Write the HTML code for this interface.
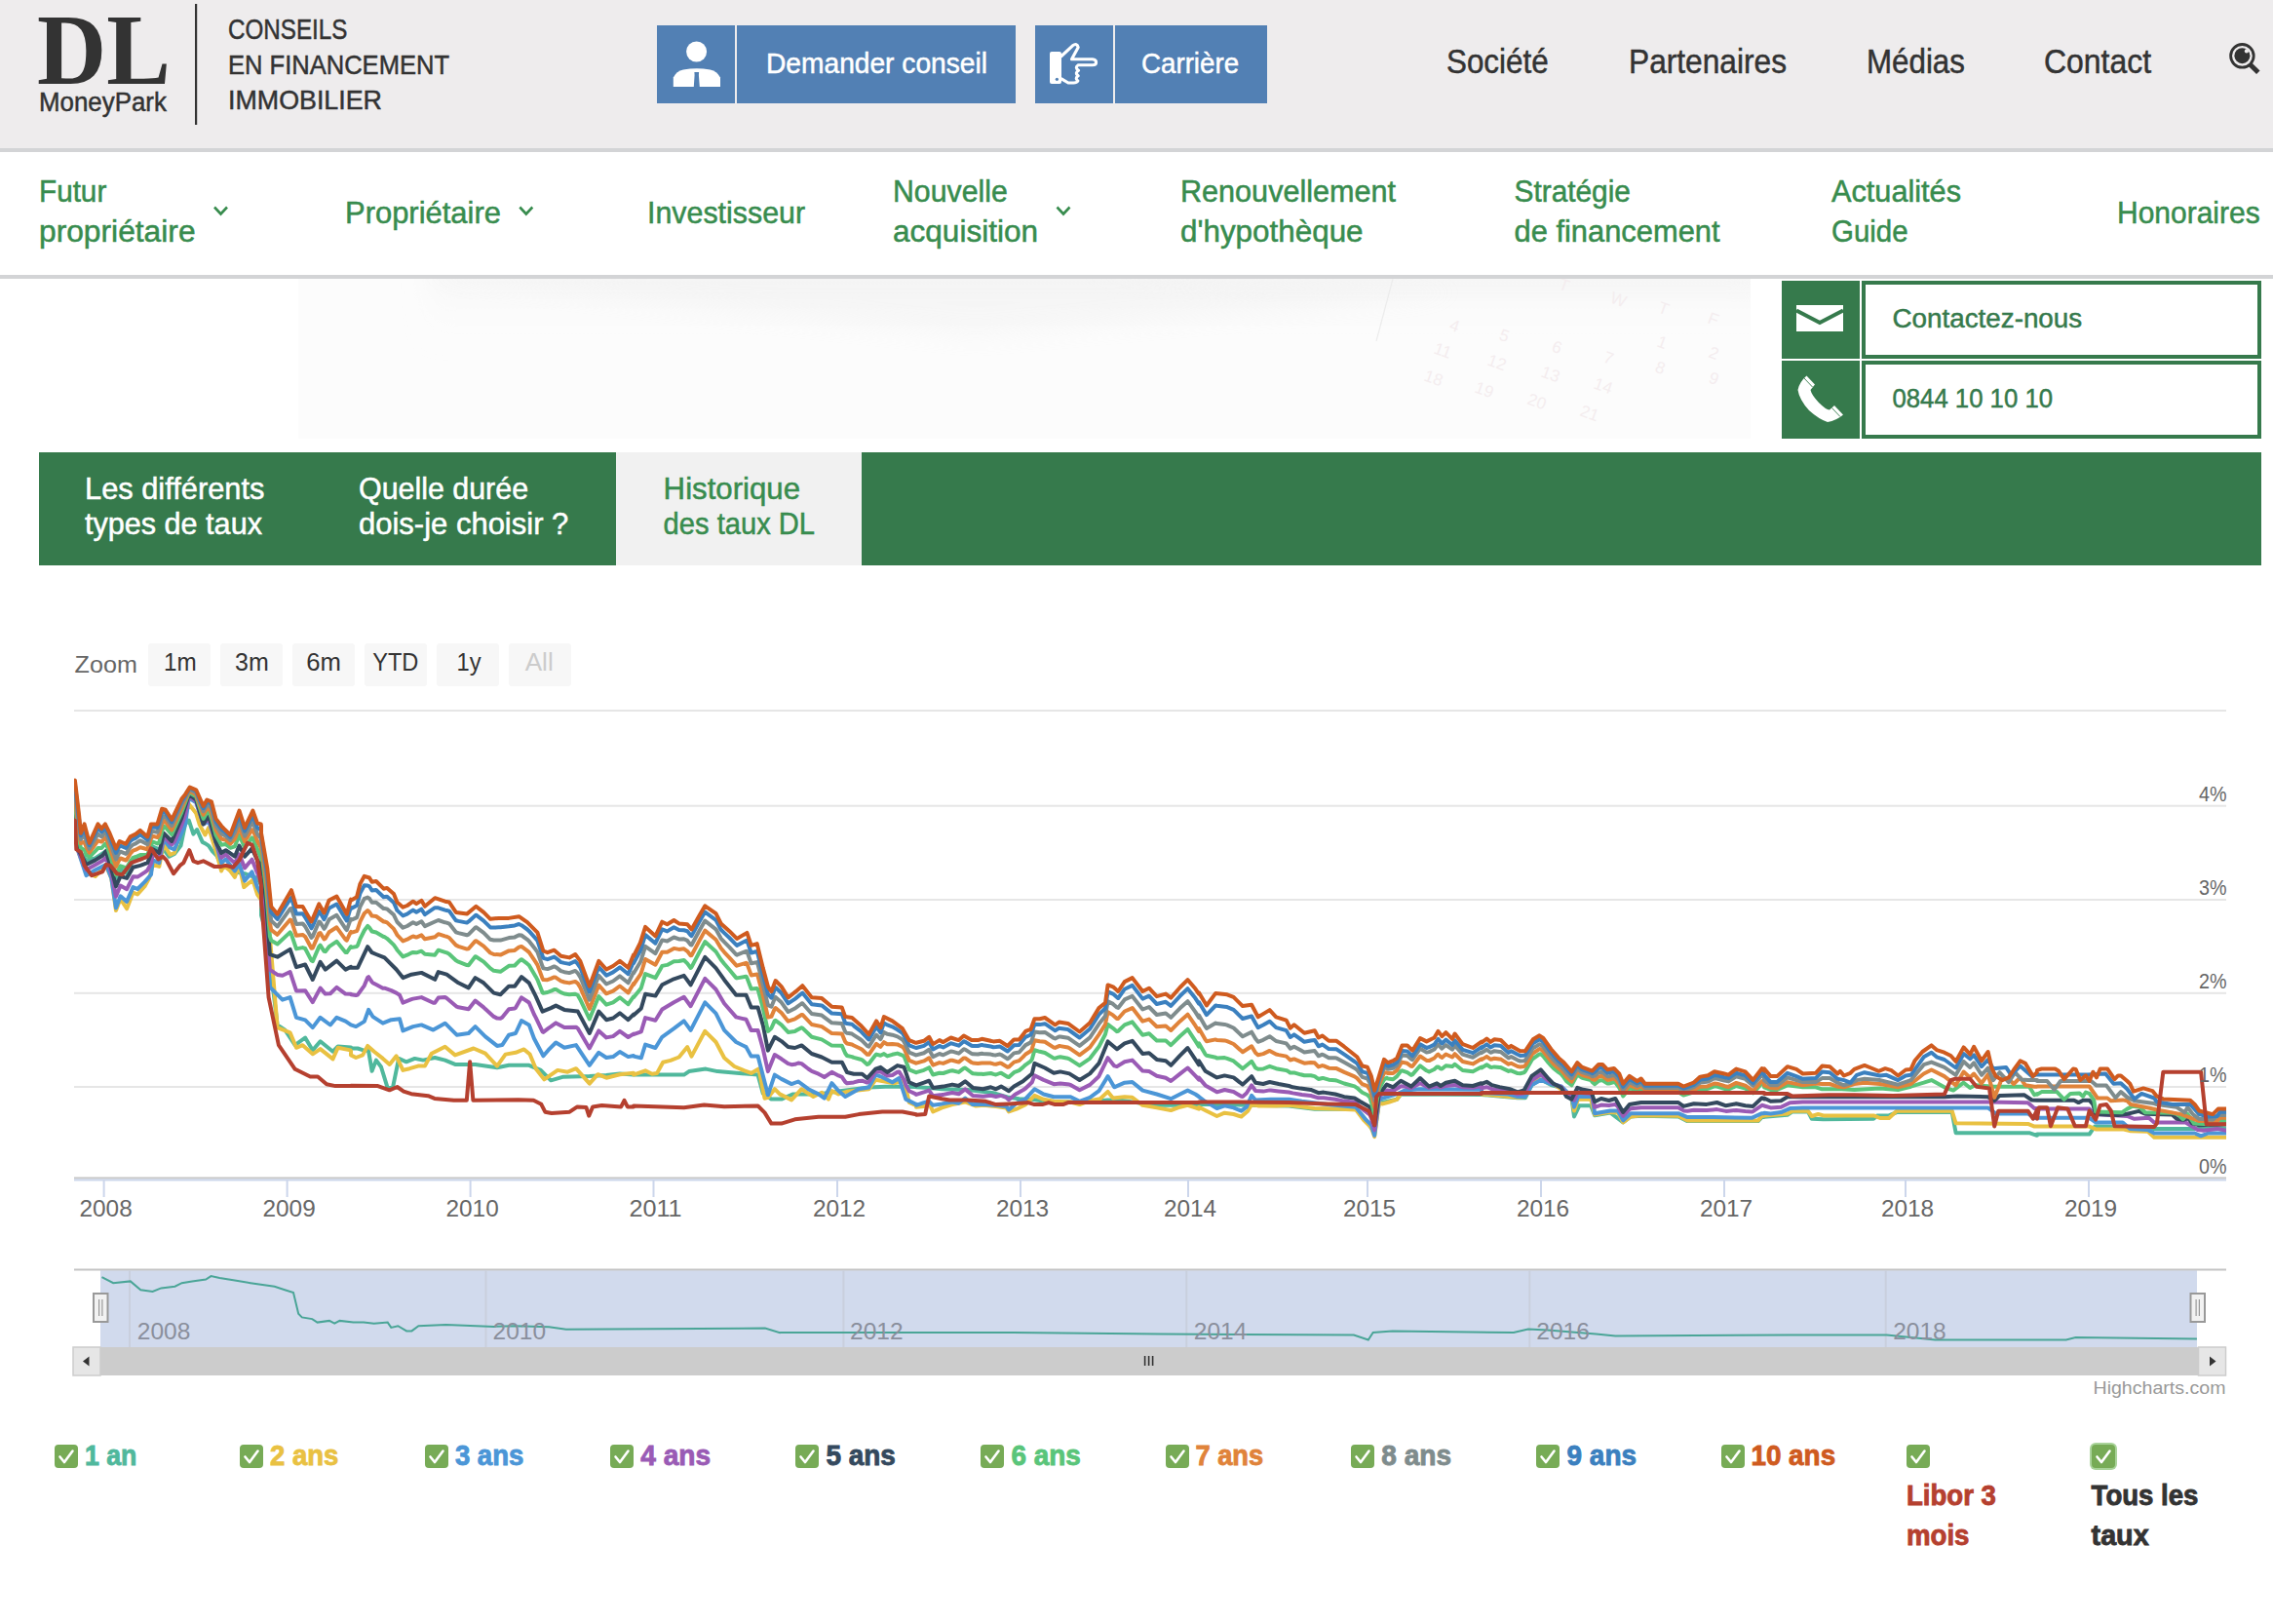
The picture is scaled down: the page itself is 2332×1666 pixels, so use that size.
<!DOCTYPE html><html lang="fr"><head><meta charset="utf-8"><title>Historique des taux DL - MoneyPark</title><style>html,body{margin:0;padding:0;background:#fff;overflow:hidden;font-family:"Liberation Sans",sans-serif}</style></head><body><svg width="2332" height="1666" viewBox="0 0 2332 1666" style="display:block">
<defs><linearGradient id="hero" x1="0" y1="0" x2="0.35" y2="1"><stop offset="0" stop-color="#efefef"/><stop offset="0.5" stop-color="#f9f9f9"/><stop offset="1" stop-color="#fdfdfd"/></linearGradient><linearGradient id="herotop" x1="0" y1="0" x2="0" y2="1"><stop offset="0" stop-color="#f4f4f4"/><stop offset="1" stop-color="#fcfcfc" stop-opacity="0"/></linearGradient><filter id="blur12" x="-50%" y="-50%" width="200%" height="200%"><feGaussianBlur stdDeviation="12"/></filter><clipPath id="heroclip"><rect x="306" y="286" width="1490" height="164"/></clipPath><clipPath id="plotclip"><rect x="76" y="740" width="2208" height="470"/></clipPath></defs>
<rect x="0" y="0" width="2332" height="1666" fill="#ffffff"/>
<rect x="0" y="0" width="2332" height="152" fill="#eeeced"/>
<rect x="0" y="152" width="2332" height="4" fill="#d3d4d6"/>
<text x="38.00" y="86.00" font-family='"Liberation Serif", serif' font-weight="700" font-size="104.12" fill="#333333" textLength="136.92" lengthAdjust="spacingAndGlyphs">DL</text>
<text x="40.00" y="113.80" font-family='"Liberation Sans", sans-serif' font-weight="400" font-size="27.62" fill="#333333" stroke="#333333" stroke-width="0.5" textLength="130.81" lengthAdjust="spacingAndGlyphs">MoneyPark</text>
<rect x="200" y="4" width="2.2" height="124" fill="#333333"/>
<text x="234.00" y="40.00" font-family='"Liberation Sans", sans-serif' font-weight="400" font-size="29.07" fill="#333333" stroke="#333333" stroke-width="0.5" textLength="122.35" lengthAdjust="spacingAndGlyphs">CONSEILS</text>
<text x="234.00" y="76.00" font-family='"Liberation Sans", sans-serif' font-weight="400" font-size="28.49" fill="#333333" stroke="#333333" stroke-width="0.5" textLength="226.99" lengthAdjust="spacingAndGlyphs">EN FINANCEMENT</text>
<text x="234.00" y="112.00" font-family='"Liberation Sans", sans-serif' font-weight="400" font-size="28.49" fill="#333333" stroke="#333333" stroke-width="0.5" textLength="157.99" lengthAdjust="spacingAndGlyphs">IMMOBILIER</text>
<rect x="674" y="26" width="80" height="80" fill="#5280b4"/>
<rect x="756" y="26" width="286" height="80" fill="#5280b4"/>
<rect x="1062" y="26" width="80" height="80" fill="#5280b4"/>
<rect x="1144" y="26" width="156" height="80" fill="#5280b4"/>
<circle cx="714.6" cy="53" r="10.5" fill="#fff"/>
<path d="M690.8,89 L690.8,79.5 Q694,73 701,71.6 Q708,70.2 714.8,70.2 Q721.6,70.2 728.6,71.6 Q735.6,73 739,79.5 L739,89 Z" fill="#fff"/>
<path d="M712.4,74 L717.1,74 L716.9,77 L717.8,89 L711.8,89 L712.6,77 Z" fill="#5280b4"/>
<rect x="1077" y="53" width="12" height="33" rx="2" fill="#fff"/>
<circle cx="1084.4" cy="81.3" r="1.6" fill="#5280b4"/>
<path d="M1089,57.5 L1100.5,46.8 Q1105,43.6 1106.2,48.6 L1099.5,60.8 L1120.8,60.8 Q1124.6,61.2 1124.6,63.9 Q1124.6,66.7 1120.8,66.7 L1106.2,66.7 Q1102.2,69.4 1106.6,72.2 Q1102.2,75 1106.2,77.8 Q1102.4,80.4 1105.9,83 Q1104.6,85 1101.5,85 L1096,85 L1089,80.8" fill="none" stroke="#fff" stroke-width="3.1" stroke-linejoin="round" stroke-linecap="round"/>
<text x="786.00" y="74.50" font-family='"Liberation Sans", sans-serif' font-weight="400" font-size="29.80" fill="#ffffff" stroke="#ffffff" stroke-width="0.5" textLength="227.00" lengthAdjust="spacingAndGlyphs">Demander conseil</text>
<text x="1171.00" y="74.50" font-family='"Liberation Sans", sans-serif' font-weight="400" font-size="29.80" fill="#ffffff" stroke="#ffffff" stroke-width="0.5" textLength="100.06" lengthAdjust="spacingAndGlyphs">Carrière</text>
<text x="1484.00" y="74.60" font-family='"Liberation Sans", sans-serif' font-weight="400" font-size="35.17" fill="#333333" stroke="#333333" stroke-width="0.5" textLength="104.62" lengthAdjust="spacingAndGlyphs">Société</text>
<text x="1671.00" y="74.60" font-family='"Liberation Sans", sans-serif' font-weight="400" font-size="35.17" fill="#333333" stroke="#333333" stroke-width="0.5" textLength="161.97" lengthAdjust="spacingAndGlyphs">Partenaires</text>
<text x="1915.00" y="74.60" font-family='"Liberation Sans", sans-serif' font-weight="400" font-size="35.17" fill="#333333" stroke="#333333" stroke-width="0.5" textLength="100.96" lengthAdjust="spacingAndGlyphs">Médias</text>
<text x="2097.00" y="74.60" font-family='"Liberation Sans", sans-serif' font-weight="400" font-size="35.17" fill="#333333" stroke="#333333" stroke-width="0.5" textLength="110.04" lengthAdjust="spacingAndGlyphs">Contact</text>
<circle cx="2300.4" cy="57.3" r="11.8" fill="none" stroke="#333" stroke-width="2.8"/>
<circle cx="2300.4" cy="57.2" r="8" fill="#333"/>
<circle cx="2304.9" cy="52.4" r="2.1" fill="#eeeced"/>
<line x1="2308.6" y1="66.2" x2="2316.8" y2="74.2" stroke="#333" stroke-width="5"/>
<rect x="0" y="282" width="2332" height="4" fill="#d3d4d6"/>
<text x="40.00" y="206.60" font-family='"Liberation Sans", sans-serif' font-weight="400" font-size="30.67" fill="#388c4e" stroke="#388c4e" stroke-width="0.5" textLength="69.27" lengthAdjust="spacingAndGlyphs">Futur</text>
<text x="40.00" y="247.70" font-family='"Liberation Sans", sans-serif' font-weight="400" font-size="30.81" fill="#388c4e" stroke="#388c4e" stroke-width="0.5" textLength="160.55" lengthAdjust="spacingAndGlyphs">propriétaire</text>
<text x="354.00" y="228.60" font-family='"Liberation Sans", sans-serif' font-weight="400" font-size="31.10" fill="#388c4e" stroke="#388c4e" stroke-width="0.5" textLength="159.98" lengthAdjust="spacingAndGlyphs">Propriétaire</text>
<text x="664.00" y="228.60" font-family='"Liberation Sans", sans-serif' font-weight="400" font-size="31.10" fill="#388c4e" stroke="#388c4e" stroke-width="0.5" textLength="162.02" lengthAdjust="spacingAndGlyphs">Investisseur</text>
<text x="916.00" y="206.60" font-family='"Liberation Sans", sans-serif' font-weight="400" font-size="30.67" fill="#388c4e" stroke="#388c4e" stroke-width="0.5" textLength="117.84" lengthAdjust="spacingAndGlyphs">Nouvelle</text>
<text x="916.00" y="247.70" font-family='"Liberation Sans", sans-serif' font-weight="400" font-size="30.81" fill="#388c4e" stroke="#388c4e" stroke-width="0.5" textLength="149.01" lengthAdjust="spacingAndGlyphs">acquisition</text>
<text x="1211.00" y="206.60" font-family='"Liberation Sans", sans-serif' font-weight="400" font-size="30.67" fill="#388c4e" stroke="#388c4e" stroke-width="0.5" textLength="221.05" lengthAdjust="spacingAndGlyphs">Renouvellement</text>
<text x="1211.00" y="247.70" font-family='"Liberation Sans", sans-serif' font-weight="400" font-size="30.81" fill="#388c4e" stroke="#388c4e" stroke-width="0.5" textLength="187.58" lengthAdjust="spacingAndGlyphs">d'hypothèque</text>
<text x="1553.50" y="206.60" font-family='"Liberation Sans", sans-serif' font-weight="400" font-size="30.67" fill="#388c4e" stroke="#388c4e" stroke-width="0.5" textLength="119.43" lengthAdjust="spacingAndGlyphs">Stratégie</text>
<text x="1553.50" y="247.70" font-family='"Liberation Sans", sans-serif' font-weight="400" font-size="30.81" fill="#388c4e" stroke="#388c4e" stroke-width="0.5" textLength="211.04" lengthAdjust="spacingAndGlyphs">de financement</text>
<text x="1879.00" y="206.60" font-family='"Liberation Sans", sans-serif' font-weight="400" font-size="30.67" fill="#388c4e" stroke="#388c4e" stroke-width="0.5" textLength="133.02" lengthAdjust="spacingAndGlyphs">Actualités</text>
<text x="1879.00" y="247.70" font-family='"Liberation Sans", sans-serif' font-weight="400" font-size="30.81" fill="#388c4e" stroke="#388c4e" stroke-width="0.5" textLength="78.56" lengthAdjust="spacingAndGlyphs">Guide</text>
<text x="2172.00" y="228.60" font-family='"Liberation Sans", sans-serif' font-weight="400" font-size="31.10" fill="#388c4e" stroke="#388c4e" stroke-width="0.5" textLength="146.64" lengthAdjust="spacingAndGlyphs">Honoraires</text>
<polyline points="220.0,212.5 226.5,219.5 233.0,212.5" fill="none" stroke="#388c4e" stroke-width="2.6"/>
<polyline points="533.3,212.5 539.8,219.5 546.3,212.5" fill="none" stroke="#388c4e" stroke-width="2.6"/>
<polyline points="1084.5,212.5 1091,219.5 1097.5,212.5" fill="none" stroke="#388c4e" stroke-width="2.6"/>
<rect x="306" y="286" width="1490" height="164" fill="#fcfcfc"/>
<g clip-path="url(#heroclip)">
<rect x="440" y="270" width="1400" height="80" fill="url(#herotop)" filter="url(#blur12)"/>
<polygon points="430,280 1150,280 1500,300 1000,345 760,320" fill="#e6e6e6" opacity="0.22" filter="url(#blur12)"/>
<polygon points="1100,280 1800,280 1800,300 1300,300" fill="#eeeeee" opacity="0.25" filter="url(#blur12)"/>
<line x1="1429" y1="286" x2="1412" y2="350" stroke="#ececec" stroke-width="1.2"/>
<text x="1598" y="296" font-family='"Liberation Sans", sans-serif' font-size="17" fill="#f4edef" transform="rotate(20 1598 296)">T</text>
<text x="1651" y="310" font-family='"Liberation Sans", sans-serif' font-size="17" fill="#f4edef" transform="rotate(20 1651 310)">W</text>
<text x="1700" y="320" font-family='"Liberation Sans", sans-serif' font-size="17" fill="#f4edef" transform="rotate(20 1700 320)">T</text>
<text x="1751" y="331" font-family='"Liberation Sans", sans-serif' font-size="17" fill="#f4edef" transform="rotate(20 1751 331)">F</text>
<text x="1486" y="338" font-family='"Liberation Sans", sans-serif' font-size="17" fill="#f4edef" transform="rotate(20 1486 338)">4</text>
<text x="1537" y="348" font-family='"Liberation Sans", sans-serif' font-size="17" fill="#f4edef" transform="rotate(20 1537 348)">5</text>
<text x="1591" y="360" font-family='"Liberation Sans", sans-serif' font-size="17" fill="#f4edef" transform="rotate(20 1591 360)">6</text>
<text x="1644" y="371" font-family='"Liberation Sans", sans-serif' font-size="17" fill="#f4edef" transform="rotate(20 1644 371)">7</text>
<text x="1699" y="355" font-family='"Liberation Sans", sans-serif' font-size="17" fill="#f4edef" transform="rotate(20 1699 355)">1</text>
<text x="1752" y="366" font-family='"Liberation Sans", sans-serif' font-size="17" fill="#f4edef" transform="rotate(20 1752 366)">2</text>
<text x="1470" y="362" font-family='"Liberation Sans", sans-serif' font-size="17" fill="#f4edef" transform="rotate(20 1470 362)">11</text>
<text x="1525" y="374" font-family='"Liberation Sans", sans-serif' font-size="17" fill="#f4edef" transform="rotate(20 1525 374)">12</text>
<text x="1580" y="386" font-family='"Liberation Sans", sans-serif' font-size="17" fill="#f4edef" transform="rotate(20 1580 386)">13</text>
<text x="1634" y="398" font-family='"Liberation Sans", sans-serif' font-size="17" fill="#f4edef" transform="rotate(20 1634 398)">14</text>
<text x="1697" y="381" font-family='"Liberation Sans", sans-serif' font-size="17" fill="#f4edef" transform="rotate(20 1697 381)">8</text>
<text x="1752" y="392" font-family='"Liberation Sans", sans-serif' font-size="17" fill="#f4edef" transform="rotate(20 1752 392)">9</text>
<text x="1460" y="390" font-family='"Liberation Sans", sans-serif' font-size="17" fill="#f4edef" transform="rotate(20 1460 390)">18</text>
<text x="1512" y="402" font-family='"Liberation Sans", sans-serif' font-size="17" fill="#f4edef" transform="rotate(20 1512 402)">19</text>
<text x="1566" y="414" font-family='"Liberation Sans", sans-serif' font-size="17" fill="#f4edef" transform="rotate(20 1566 414)">20</text>
<text x="1620" y="426" font-family='"Liberation Sans", sans-serif' font-size="17" fill="#f4edef" transform="rotate(20 1620 426)">21</text>
</g>
<rect x="1828" y="288" width="80" height="80" fill="#367a4c"/>
<rect x="1828" y="370" width="80" height="80" fill="#367a4c"/>
<rect x="1912" y="290" width="406" height="76" fill="#fff" stroke="#367a4c" stroke-width="4"/>
<rect x="1912" y="372" width="406" height="76" fill="#fff" stroke="#367a4c" stroke-width="4"/>
<rect x="1843" y="313" width="48" height="27" fill="#fff"/>
<polyline points="1843,318.4 1867,331 1891,318.4" fill="none" stroke="#367a4c" stroke-width="4"/>
<path d="M1853.5,385.5 L1862,394.5 L1857.5,400 Q1858.5,405 1866,413 Q1873.5,420.5 1877,420.5 L1882,416 L1891,425.5 Q1884,431.5 1875,433 Q1866,430 1856,421 Q1846,410 1844.5,400 Q1846,392 1853.5,385.5 Z" fill="#fff"/>
<line x1="1851" y1="388" x2="1859.5" y2="397" stroke="#367a4c" stroke-width="0.9"/>
<line x1="1879.5" y1="418.5" x2="1888" y2="427.5" stroke="#367a4c" stroke-width="0.9"/>
<text x="1941.50" y="335.50" font-family='"Liberation Sans", sans-serif' font-weight="400" font-size="27.62" fill="#367a4c" stroke="#367a4c" stroke-width="0.5" textLength="194.67" lengthAdjust="spacingAndGlyphs">Contactez-nous</text>
<text x="1941.50" y="417.60" font-family='"Liberation Sans", sans-serif' font-weight="400" font-size="27.62" fill="#367a4c" stroke="#367a4c" stroke-width="0.5" textLength="164.50" lengthAdjust="spacingAndGlyphs">0844 10 10 10</text>
<rect x="40" y="464" width="2280" height="116" fill="#367a4c"/>
<rect x="632" y="464" width="252" height="116" fill="#f1f1f1"/>
<text x="87.00" y="512.00" font-family='"Liberation Sans", sans-serif' font-weight="400" font-size="31.98" fill="#ffffff" stroke="#ffffff" stroke-width="0.5" textLength="184.41" lengthAdjust="spacingAndGlyphs">Les différents</text>
<text x="87.00" y="547.50" font-family='"Liberation Sans", sans-serif' font-weight="400" font-size="31.98" fill="#ffffff" stroke="#ffffff" stroke-width="0.5" textLength="181.95" lengthAdjust="spacingAndGlyphs">types de taux</text>
<text x="368.00" y="512.00" font-family='"Liberation Sans", sans-serif' font-weight="400" font-size="31.98" fill="#ffffff" stroke="#ffffff" stroke-width="0.5" textLength="174.04" lengthAdjust="spacingAndGlyphs">Quelle durée</text>
<text x="368.00" y="547.50" font-family='"Liberation Sans", sans-serif' font-weight="400" font-size="31.98" fill="#ffffff" stroke="#ffffff" stroke-width="0.5" textLength="215.32" lengthAdjust="spacingAndGlyphs">dois-je choisir ?</text>
<text x="680.60" y="512.00" font-family='"Liberation Sans", sans-serif' font-weight="400" font-size="31.98" fill="#388c4e" stroke="#388c4e" stroke-width="0.5" textLength="140.47" lengthAdjust="spacingAndGlyphs">Historique</text>
<text x="680.60" y="547.50" font-family='"Liberation Sans", sans-serif' font-weight="400" font-size="31.98" fill="#388c4e" stroke="#388c4e" stroke-width="0.5" textLength="155.44" lengthAdjust="spacingAndGlyphs">des taux DL</text>
<text x="76.60" y="690.00" font-family='"Liberation Sans", sans-serif' font-weight="400" font-size="24.71" fill="#666666" textLength="64.23" lengthAdjust="spacingAndGlyphs">Zoom</text>
<rect x="152" y="660" width="64" height="44" rx="3" fill="#f7f7f7"/>
<text x="168.10" y="688.00" font-family='"Liberation Sans", sans-serif' font-weight="400" font-size="25.58" fill="#333333" textLength="33.68" lengthAdjust="spacingAndGlyphs">1m</text>
<rect x="226" y="660" width="64" height="44" rx="3" fill="#f7f7f7"/>
<text x="241.00" y="688.00" font-family='"Liberation Sans", sans-serif' font-weight="400" font-size="25.58" fill="#333333" textLength="34.68" lengthAdjust="spacingAndGlyphs">3m</text>
<rect x="300" y="660" width="64" height="44" rx="3" fill="#f7f7f7"/>
<text x="314.20" y="688.00" font-family='"Liberation Sans", sans-serif' font-weight="400" font-size="25.58" fill="#333333" textLength="35.68" lengthAdjust="spacingAndGlyphs">6m</text>
<rect x="374" y="660" width="64" height="44" rx="3" fill="#f7f7f7"/>
<text x="382.20" y="688.00" font-family='"Liberation Sans", sans-serif' font-weight="400" font-size="25.58" fill="#333333" textLength="47.20" lengthAdjust="spacingAndGlyphs">YTD</text>
<rect x="448" y="660" width="64" height="44" rx="3" fill="#f7f7f7"/>
<text x="468.60" y="688.00" font-family='"Liberation Sans", sans-serif' font-weight="400" font-size="25.58" fill="#333333" textLength="25.03" lengthAdjust="spacingAndGlyphs">1y</text>
<rect x="522" y="660" width="64" height="44" rx="3" fill="#f7f7f7"/>
<text x="538.70" y="688.00" font-family='"Liberation Sans", sans-serif' font-weight="400" font-size="25.58" fill="#cccccc" textLength="29.04" lengthAdjust="spacingAndGlyphs">All</text>
<rect x="76" y="728" width="2208" height="2" fill="#e6e6e6"/>
<rect x="76" y="825.7" width="2208" height="2" fill="#e6e6e6"/>
<rect x="76" y="922" width="2208" height="2" fill="#e6e6e6"/>
<rect x="76" y="1017.8" width="2208" height="2" fill="#e6e6e6"/>
<rect x="76" y="1114" width="2208" height="2" fill="#e6e6e6"/>
<rect x="76" y="1207.5" width="2208" height="2" fill="#c6c6c6"/>
<rect x="76" y="1209.5" width="2208" height="2" fill="#ccd6eb"/>
<rect x="105.6" y="1211" width="2" height="17" fill="#ccd6eb"/>
<text x="81.50" y="1248.20" font-family='"Liberation Sans", sans-serif' font-weight="400" font-size="23.98" fill="#666666" textLength="54.19" lengthAdjust="spacingAndGlyphs">2008</text>
<rect x="293.6" y="1211" width="2" height="17" fill="#ccd6eb"/>
<text x="269.50" y="1248.20" font-family='"Liberation Sans", sans-serif' font-weight="400" font-size="23.98" fill="#666666" textLength="54.19" lengthAdjust="spacingAndGlyphs">2009</text>
<rect x="481.6" y="1211" width="2" height="17" fill="#ccd6eb"/>
<text x="457.50" y="1248.20" font-family='"Liberation Sans", sans-serif' font-weight="400" font-size="23.98" fill="#666666" textLength="54.19" lengthAdjust="spacingAndGlyphs">2010</text>
<rect x="669.5" y="1211" width="2" height="17" fill="#ccd6eb"/>
<text x="645.40" y="1248.20" font-family='"Liberation Sans", sans-serif' font-weight="400" font-size="23.98" fill="#666666" textLength="54.21" lengthAdjust="spacingAndGlyphs">2011</text>
<rect x="858" y="1211" width="2" height="17" fill="#ccd6eb"/>
<text x="833.90" y="1248.20" font-family='"Liberation Sans", sans-serif' font-weight="400" font-size="23.98" fill="#666666" textLength="54.19" lengthAdjust="spacingAndGlyphs">2012</text>
<rect x="1046" y="1211" width="2" height="17" fill="#ccd6eb"/>
<text x="1021.90" y="1248.20" font-family='"Liberation Sans", sans-serif' font-weight="400" font-size="23.98" fill="#666666" textLength="54.19" lengthAdjust="spacingAndGlyphs">2013</text>
<rect x="1218" y="1211" width="2" height="17" fill="#ccd6eb"/>
<text x="1193.90" y="1248.20" font-family='"Liberation Sans", sans-serif' font-weight="400" font-size="23.98" fill="#666666" textLength="54.19" lengthAdjust="spacingAndGlyphs">2014</text>
<rect x="1402" y="1211" width="2" height="17" fill="#ccd6eb"/>
<text x="1377.90" y="1248.20" font-family='"Liberation Sans", sans-serif' font-weight="400" font-size="23.98" fill="#666666" textLength="54.19" lengthAdjust="spacingAndGlyphs">2015</text>
<rect x="1580" y="1211" width="2" height="17" fill="#ccd6eb"/>
<text x="1555.90" y="1248.20" font-family='"Liberation Sans", sans-serif' font-weight="400" font-size="23.98" fill="#666666" textLength="54.19" lengthAdjust="spacingAndGlyphs">2016</text>
<rect x="1768" y="1211" width="2" height="17" fill="#ccd6eb"/>
<text x="1743.90" y="1248.20" font-family='"Liberation Sans", sans-serif' font-weight="400" font-size="23.98" fill="#666666" textLength="54.19" lengthAdjust="spacingAndGlyphs">2017</text>
<rect x="1954" y="1211" width="2" height="17" fill="#ccd6eb"/>
<text x="1929.90" y="1248.20" font-family='"Liberation Sans", sans-serif' font-weight="400" font-size="23.98" fill="#666666" textLength="54.19" lengthAdjust="spacingAndGlyphs">2018</text>
<rect x="2142" y="1211" width="2" height="17" fill="#ccd6eb"/>
<text x="2117.90" y="1248.20" font-family='"Liberation Sans", sans-serif' font-weight="400" font-size="23.98" fill="#666666" textLength="54.19" lengthAdjust="spacingAndGlyphs">2019</text>
<g clip-path="url(#plotclip)">
<polyline points="76.9,832.5 80.2,871.3 88.5,882.4 97.7,880.5 108.8,873.1 114.3,891.6 119.0,900.9 123.6,891.6 130.1,896.2 136.5,882.4 143.9,881.5 151.3,878.7 156.8,868.5 163.3,871.3 167.9,871.3 173.5,878.7 179.0,875.9 185.5,867.6 190.1,845.4 193.8,841.7 198.4,855.6 202.1,851.0 207.7,863.9 211.4,865.8 214.1,867.6 217.8,873.1 222.4,877.8 227.1,887.0 236.3,889.8 245.5,895.3 251.1,896.2 258.5,899.0 264.0,900.9 268.0,907.8 268.0,939.0 274.3,961.0 276.9,986.9 284.6,1051.5 292.4,1056.7 302.7,1072.2 313.1,1064.5 320.8,1077.4 328.6,1068.3 341.5,1078.7 346.7,1073.5 360.0,1074.6 360.0,1075.5 366.9,1075.5 372.1,1077.2 378.1,1078.1 381.6,1098.8 385.9,1087.6 391.0,1094.5 397.9,1116.9 403.1,1115.2 409.1,1085.9 416.9,1089.3 425.5,1085.9 434.1,1087.6 446.2,1085.0 456.6,1087.6 466.9,1091.9 487.6,1091.9 510.0,1095.3 522.1,1092.8 542.8,1092.8 554.8,1097.9 565.2,1108.3 577.2,1104.8 604.8,1104.0 622.1,1103.1 635.9,1101.4 650.0,1102.4 650.0,1102.6 670.7,1102.6 701.7,1102.6 706.9,1099.1 724.1,1096.6 736.2,1099.1 777.6,1102.6 782.8,1121.6 791.4,1127.6 801.7,1127.6 813.8,1122.4 839.7,1122.4 863.8,1119.0 891.4,1115.5 908.6,1114.7 927.6,1114.7 940.0,1115.1 940.0,1115.3 953.2,1115.9 966.4,1117.3 992.8,1117.9 1019.2,1121.2 1035.0,1125.8 1045.6,1127.2 1058.8,1127.8 1072.0,1129.8 1085.2,1130.5 1105.0,1130.5 1124.8,1129.8 1136.6,1128.5 1151.2,1129.1 1171.0,1131.8 1190.8,1133.8 1204.0,1133.8 1230.0,1133.8 1230.0,1133.1 1256.4,1133.1 1282.8,1133.8 1322.4,1134.4 1348.8,1137.7 1391.0,1137.7 1400.3,1147.6 1410.2,1162.1 1414.8,1131.8 1433.2,1127.8 1437.2,1122.5 1520.0,1123.1 1520.0,1123.0 1557.0,1126.3 1564.9,1126.3 1571.5,1113.1 1580.7,1107.2 1591.3,1113.1 1601.8,1115.8 1612.4,1126.3 1615.0,1145.5 1620.3,1134.3 1632.2,1134.3 1636.1,1144.2 1652.0,1141.5 1665.2,1151.4 1673.1,1145.5 1683.7,1144.8 1721.9,1145.5 1731.2,1150.1 1803.8,1150.1 1807.7,1146.1 1810.0,1146.0 1810.0,1145.7 1833.8,1143.7 1839.0,1140.4 1854.9,1140.4 1858.8,1147.7 1870.7,1148.3 1922.2,1147.7 1926.1,1144.4 1938.0,1144.4 1945.9,1141.1 1973.7,1141.1 2002.7,1141.1 2006.6,1162.2 2081.9,1162.2 2089.8,1164.8 2090.0,1164.8 2090.0,1163.5 2143.6,1163.5 2149.1,1155.6 2182.4,1156.1 2210.1,1157.9 2256.3,1157.9 2274.8,1157.0 2284.0,1157.5" fill="none" stroke="#50b89c" stroke-width="4" stroke-linejoin="round" stroke-linecap="round"/>
<polyline points="76.9,841.7 80.2,873.1 88.5,895.3 97.7,899.0 108.8,887.9 114.3,900.9 119.0,934.1 123.6,922.1 130.1,932.3 136.5,915.6 141.1,917.5 148.5,909.2 153.1,900.9 156.8,887.0 163.3,888.9 167.9,865.8 174.4,876.8 179.0,875.0 190.1,836.2 193.8,825.1 201.2,834.3 204.9,846.4 210.4,856.5 214.1,849.1 217.8,861.1 222.4,875.9 227.1,893.5 229.8,887.9 236.3,893.5 240.9,899.9 245.5,887.0 250.2,910.1 259.4,902.7 264.0,917.5 268.0,923.1 268.0,928.5 276.9,961.0 284.6,1054.1 297.6,1059.3 304.0,1074.8 310.5,1072.2 320.8,1081.3 328.6,1076.1 341.5,1086.4 346.7,1074.8 359.6,1077.4 360.0,1077.9 360.0,1082.4 365.2,1085.0 372.1,1082.4 377.2,1072.9 384.1,1079.0 392.8,1085.9 399.7,1091.9 406.6,1083.3 413.4,1097.9 420.3,1096.2 429.0,1093.6 435.9,1093.6 442.8,1080.7 456.6,1073.8 466.9,1082.4 485.9,1075.5 497.9,1080.7 510.0,1093.6 518.6,1081.6 529.0,1079.8 537.6,1076.4 543.6,1081.6 549.7,1096.2 558.3,1107.4 572.1,1097.9 582.4,1099.7 591.0,1096.2 604.8,1111.7 613.4,1102.2 622.1,1105.7 635.9,1102.2 650.0,1100.7 650.0,1102.6 662.1,1098.3 669.0,1101.7 674.1,1100.9 680.2,1089.7 687.9,1087.9 696.6,1084.5 705.2,1074.1 709.5,1083.6 723.3,1057.8 734.5,1069.0 743.1,1085.3 753.4,1094.0 763.8,1098.3 770.7,1100.9 778.4,1096.6 784.5,1126.7 787.9,1125.9 794.8,1117.2 800.0,1122.4 812.1,1128.4 822.4,1117.2 834.5,1125.0 843.1,1120.7 850.0,1127.6 853.4,1119.0 860.3,1122.4 869.0,1119.8 891.4,1117.2 898.3,1107.8 917.2,1111.2 927.6,1108.6 932.8,1131.0 940.0,1134.1 940.0,1135.7 947.9,1135.1 953.2,1131.8 957.2,1140.4 966.4,1136.4 977.0,1133.1 990.2,1130.5 1000.7,1134.4 1009.9,1133.8 1021.8,1135.1 1032.4,1136.4 1035.0,1140.4 1042.9,1137.7 1052.2,1133.1 1061.4,1123.9 1070.7,1127.8 1081.2,1129.8 1098.4,1130.5 1107.6,1133.1 1118.2,1129.1 1128.7,1127.2 1136.6,1119.9 1141.9,1126.5 1153.8,1125.2 1161.7,1125.8 1172.3,1133.8 1186.8,1136.4 1201.3,1139.0 1210.6,1135.7 1218.5,1133.8 1226.4,1136.4 1230.0,1137.6 1230.0,1135.7 1237.9,1139.7 1248.5,1145.0 1256.4,1141.7 1265.6,1143.0 1273.6,1145.6 1280.2,1139.7 1284.1,1133.1 1290.7,1134.4 1309.2,1134.4 1322.4,1133.8 1348.8,1137.1 1375.2,1137.7 1391.0,1138.4 1398.9,1148.9 1406.9,1156.9 1410.2,1166.1 1414.8,1131.8 1418.7,1132.4 1425.3,1130.5 1433.2,1127.8 1437.2,1121.9 1520.0,1121.9 1520.0,1122.4 1557.0,1125.7 1564.9,1125.0 1571.5,1111.8 1580.7,1101.9 1589.9,1109.2 1612.4,1125.0 1615.0,1139.5 1619.0,1127.7 1632.2,1127.7 1636.1,1143.5 1652.0,1140.9 1659.9,1141.5 1665.2,1151.4 1673.1,1145.5 1683.7,1144.2 1721.9,1144.8 1731.2,1149.4 1803.8,1149.4 1807.7,1144.8 1810.0,1144.7 1810.0,1144.4 1833.8,1142.4 1839.0,1139.7 1854.9,1139.7 1858.8,1145.0 1865.4,1143.0 1870.7,1144.4 1922.2,1144.4 1928.8,1147.0 1938.0,1147.0 1945.9,1139.7 1971.0,1139.7 2002.7,1139.7 2006.6,1152.3 2080.6,1152.9 2087.2,1155.6 2090.0,1155.6 2090.0,1155.6 2143.6,1155.6 2150.1,1158.4 2177.8,1158.4 2186.1,1160.2 2203.6,1160.7 2210.1,1166.7 2284.0,1166.7" fill="none" stroke="#e9c142" stroke-width="4" stroke-linejoin="round" stroke-linecap="round"/>
<polyline points="76.9,827.0 80.2,873.1 88.5,898.1 97.7,892.5 105.1,888.9 108.8,887.0 114.3,900.9 119.0,931.4 123.6,919.3 130.1,924.9 136.5,910.1 141.1,912.0 148.5,904.6 155.0,897.2 156.8,882.4 163.3,885.2 167.9,861.1 174.4,869.5 179.0,871.3 190.1,845.4 193.8,818.6 201.2,823.3 208.6,845.4 214.1,842.7 221.5,863.9 227.1,885.2 231.7,881.5 240.9,893.5 245.5,886.1 251.1,903.6 258.5,894.4 264.0,910.1 268.0,917.6 268.0,927.0 271.7,945.5 276.9,1012.7 289.8,1025.7 297.6,1023.1 304.0,1043.8 313.1,1046.4 320.8,1054.1 328.6,1043.8 338.9,1051.5 345.4,1043.8 354.5,1047.6 360.0,1051.3 360.0,1051.4 365.2,1053.1 373.8,1047.9 378.1,1035.9 382.4,1042.8 392.8,1049.7 401.4,1046.2 410.0,1045.3 413.4,1057.4 423.8,1053.1 432.4,1051.4 444.5,1056.6 456.6,1049.7 468.6,1061.7 480.7,1060.0 487.6,1053.1 497.9,1063.4 510.0,1072.9 515.2,1072.1 522.1,1061.7 529.0,1060.0 535.0,1047.1 542.8,1051.4 547.9,1065.2 557.4,1083.3 562.6,1077.2 570.3,1069.5 579.0,1074.7 591.0,1072.1 604.8,1092.8 614.3,1079.8 622.1,1085.0 629.0,1084.1 635.9,1079.0 644.5,1084.1 650.0,1083.0 650.0,1083.6 657.8,1085.3 662.1,1071.6 672.4,1075.0 679.3,1063.8 691.4,1055.2 701.7,1047.4 708.6,1056.9 723.3,1028.4 734.5,1039.7 743.1,1056.9 755.2,1069.0 765.5,1074.1 770.7,1083.6 777.6,1083.6 782.8,1103.4 787.9,1123.3 794.8,1102.6 801.7,1106.9 812.1,1112.1 819.0,1109.5 829.3,1117.2 839.7,1122.4 845.7,1126.7 853.4,1111.2 860.3,1119.0 867.2,1125.0 881.0,1117.2 891.4,1115.5 898.3,1102.6 903.4,1104.3 915.5,1110.3 922.4,1106.0 929.3,1127.6 939.7,1132.8 940.0,1132.7 940.0,1133.8 947.9,1131.1 953.2,1129.8 957.2,1133.8 966.4,1132.4 977.0,1130.5 983.6,1131.8 990.2,1126.5 998.1,1133.1 1008.6,1133.1 1021.8,1133.8 1032.4,1135.1 1035.0,1138.4 1042.9,1131.8 1052.2,1127.2 1061.4,1117.3 1070.7,1122.5 1081.2,1125.2 1098.4,1125.2 1107.6,1129.8 1118.2,1125.8 1127.4,1119.2 1136.6,1104.1 1143.2,1115.3 1153.8,1110.7 1161.7,1110.0 1172.3,1118.6 1186.8,1122.5 1201.3,1127.2 1210.6,1122.5 1218.5,1118.6 1226.4,1122.5 1230.0,1125.0 1230.0,1125.2 1235.3,1129.1 1248.5,1137.1 1256.4,1134.4 1265.6,1136.4 1273.6,1139.7 1278.8,1135.7 1284.1,1123.9 1288.1,1128.5 1303.9,1127.8 1322.4,1127.8 1335.6,1129.8 1362.0,1133.1 1391.0,1135.7 1400.3,1147.6 1406.9,1154.2 1410.2,1164.8 1414.8,1127.8 1425.3,1124.5 1434.6,1121.9 1441.2,1118.6 1457.0,1117.3 1520.0,1117.8 1520.0,1121.1 1546.4,1122.4 1557.0,1125.0 1564.9,1125.0 1571.5,1113.1 1580.7,1107.9 1591.3,1111.8 1601.8,1114.5 1612.4,1125.0 1615.0,1135.6 1619.0,1125.0 1633.5,1125.0 1636.1,1142.2 1652.0,1139.5 1659.9,1139.5 1665.2,1149.4 1673.1,1142.2 1683.7,1142.2 1721.9,1142.2 1731.2,1146.1 1757.6,1146.1 1797.2,1146.8 1807.7,1142.2 1810.0,1142.2 1810.0,1141.7 1816.6,1142.4 1827.2,1141.1 1836.4,1137.1 1849.6,1136.4 1942.0,1136.4 2039.6,1136.4 2047.6,1142.4 2080.6,1142.4 2087.2,1147.0 2090.0,1147.0 2090.0,1146.8 2143.6,1146.8 2150.1,1151.5 2177.8,1151.5 2185.2,1157.9 2203.6,1158.9 2210.1,1162.5 2251.7,1162.5 2258.1,1165.3 2265.5,1162.5 2284.0,1162.5" fill="none" stroke="#4b96d7" stroke-width="4" stroke-linejoin="round" stroke-linecap="round"/>
<polyline points="76.9,829.9 80.2,872.2 88.5,892.2 97.7,887.2 105.1,883.0 108.8,879.7 114.3,896.0 119.0,919.6 123.6,908.6 130.1,912.2 136.5,899.3 141.1,899.6 143.9,897.9 148.5,894.8 151.3,892.8 155.0,885.9 156.8,876.5 163.3,879.8 167.9,857.7 174.4,865.0 176.2,866.4 179.0,863.4 186.4,846.1 190.1,835.6 193.8,816.7 201.2,821.8 208.6,845.4 214.1,839.2 221.5,863.9 227.1,879.8 231.7,876.6 240.9,885.6 245.5,876.3 251.1,890.4 258.5,881.7 264.0,895.4 268.0,906.5 268.0,901.4 271.7,928.2 273.0,942.4 276.9,994.9 284.6,999.9 289.8,1000.7 297.6,997.0 304.0,1016.4 313.1,1016.2 320.8,1028.1 328.6,1013.6 333.8,1019.6 338.9,1019.2 345.4,1012.9 354.5,1019.6 360.0,1019.8 360.0,1020.3 365.2,1021.1 366.9,1020.6 373.8,1011.1 377.2,1002.7 378.1,1002.2 381.6,1007.4 382.4,1008.2 385.9,1010.0 392.8,1013.7 394.5,1013.7 401.4,1016.1 406.6,1018.6 410.0,1020.7 413.4,1028.6 422.1,1025.1 423.8,1024.6 432.4,1023.1 444.5,1028.7 446.2,1028.7 449.7,1023.6 456.6,1022.9 458.3,1024.0 468.6,1032.7 470.3,1033.3 480.7,1035.3 487.6,1026.6 496.2,1033.4 497.9,1035.1 506.6,1042.9 510.0,1044.6 513.4,1044.8 515.2,1043.7 522.1,1035.2 528.1,1034.5 529.0,1033.8 535.0,1023.3 542.8,1028.5 547.9,1040.5 549.7,1043.9 556.6,1058.3 557.4,1058.9 562.6,1054.9 565.2,1053.2 570.3,1049.4 579.0,1054.1 591.0,1053.7 592.8,1055.0 604.8,1075.4 614.3,1057.4 622.1,1064.4 629.0,1063.1 635.9,1057.9 644.5,1064.0 650.0,1060.6 650.0,1061.2 657.8,1058.4 662.1,1044.1 672.4,1046.7 679.3,1035.5 691.4,1028.2 701.7,1022.7 708.6,1032.2 723.3,1003.8 734.5,1015.0 743.1,1029.5 755.2,1043.4 765.5,1045.8 770.7,1057.1 777.6,1057.1 782.8,1076.0 787.9,1099.1 794.8,1082.0 801.7,1086.3 808.6,1091.2 812.1,1092.2 815.5,1091.8 819.0,1090.5 822.4,1091.1 829.3,1096.5 832.8,1098.9 839.7,1101.7 843.1,1103.5 845.7,1105.0 853.4,1099.8 860.3,1103.4 863.8,1104.8 867.2,1109.9 869.0,1111.3 875.9,1110.4 881.0,1109.0 884.5,1108.7 889.7,1110.6 891.4,1109.5 898.3,1099.4 903.4,1099.3 910.3,1103.6 915.5,1103.0 920.7,1099.7 922.4,1099.4 927.6,1107.7 929.3,1113.0 932.8,1119.3 939.7,1122.4 940.0,1122.4 940.0,1122.9 947.9,1120.3 953.2,1118.6 957.2,1124.3 966.4,1123.1 967.7,1122.9 977.0,1121.0 983.6,1122.3 990.2,1117.4 998.1,1124.0 1008.6,1124.7 1016.5,1123.8 1021.8,1125.0 1027.1,1123.9 1032.4,1125.9 1035.0,1128.2 1040.3,1123.7 1042.9,1121.9 1049.5,1118.3 1052.2,1116.5 1058.8,1110.2 1061.4,1103.3 1070.7,1107.9 1072.0,1108.4 1081.2,1112.2 1087.8,1111.5 1097.1,1112.6 1098.4,1113.0 1107.6,1118.3 1118.2,1112.9 1127.4,1104.2 1136.6,1085.2 1143.2,1093.4 1145.9,1094.1 1153.8,1089.3 1161.7,1087.6 1172.3,1098.6 1178.9,1099.1 1186.8,1103.7 1196.0,1105.7 1201.3,1109.0 1210.6,1101.6 1218.5,1095.5 1226.4,1103.7 1230.0,1107.7 1230.0,1105.6 1235.3,1111.9 1236.6,1113.4 1248.5,1120.3 1256.4,1118.0 1265.6,1120.0 1273.6,1124.8 1274.9,1124.9 1278.8,1121.5 1284.1,1113.4 1288.1,1119.0 1296.0,1119.6 1302.6,1118.4 1303.9,1118.5 1311.8,1119.4 1322.4,1120.5 1326.3,1121.4 1334.3,1122.7 1335.6,1122.9 1344.8,1124.0 1352.7,1126.3 1358.0,1126.2 1362.0,1126.8 1369.9,1127.8 1379.1,1129.6 1389.7,1130.8 1391.0,1131.3 1395.0,1135.0 1400.3,1139.7 1405.5,1143.8 1406.9,1147.2 1410.2,1159.2 1414.8,1125.0 1422.7,1118.6 1425.3,1118.8 1429.3,1119.1 1434.6,1116.0 1437.2,1114.3 1441.2,1114.5 1447.8,1116.2 1457.0,1111.3 1466.2,1115.9 1474.2,1114.2 1478.1,1115.6 1483.4,1113.9 1492.6,1112.9 1500.6,1115.3 1511.1,1115.7 1519.0,1114.4 1520.0,1114.3 1520.0,1116.2 1525.3,1115.2 1530.6,1117.1 1538.5,1118.4 1546.4,1119.3 1549.0,1119.9 1557.0,1122.6 1563.6,1121.5 1564.9,1120.2 1571.5,1108.2 1580.7,1102.3 1588.6,1108.6 1591.3,1110.4 1593.9,1112.1 1601.8,1115.2 1607.1,1122.5 1612.4,1126.4 1615.0,1128.6 1618.3,1121.0 1619.0,1120.2 1624.3,1121.2 1632.2,1121.9 1633.5,1123.9 1636.1,1135.9 1642.7,1133.6 1650.7,1134.0 1652.0,1133.7 1657.3,1132.9 1659.9,1135.3 1665.2,1144.9 1671.8,1137.9 1673.1,1137.2 1683.7,1136.2 1721.9,1136.2 1727.2,1139.4 1731.2,1139.7 1737.8,1138.8 1751.0,1139.1 1757.6,1138.5 1761.5,1138.1 1770.8,1139.9 1781.3,1139.0 1790.6,1140.1 1797.2,1140.4 1798.5,1140.2 1807.7,1133.8 1810.0,1134.4 1810.0,1134.5 1816.6,1136.4 1827.2,1135.8 1836.4,1131.2 1849.6,1130.5 1942.0,1130.5 2039.6,1130.5 2080.6,1131.2 2087.2,1137.1 2090.0,1137.1 2090.0,1137.6 2143.6,1137.6 2149.1,1143.1 2182.4,1145.0 2189.8,1147.8 2204.6,1146.8 2210.1,1151.5 2242.4,1151.5 2254.4,1158.9 2260.9,1159.8 2274.8,1157.9 2284.0,1159.8" fill="none" stroke="#9a5bb5" stroke-width="4" stroke-linejoin="round" stroke-linecap="round"/>
<polyline points="76.9,832.5 80.2,871.3 88.5,887.0 97.7,882.4 105.1,877.8 108.8,873.1 114.3,891.6 119.0,909.2 123.6,899.0 130.1,900.9 136.5,889.8 143.9,887.9 151.3,885.2 156.8,871.3 163.3,875.0 167.9,854.7 176.2,863.0 186.4,839.0 193.8,814.9 201.2,820.5 208.6,845.4 214.1,836.2 221.5,863.9 227.1,875.0 231.7,872.2 240.9,878.7 245.5,867.6 251.1,878.7 258.5,870.4 264.0,882.4 268.0,896.8 268.0,878.8 273.0,924.8 276.9,979.1 284.6,981.7 297.6,973.9 304.0,992.1 313.1,989.5 320.8,1005.0 328.6,986.9 333.8,994.6 345.4,985.6 354.5,994.6 360.0,991.9 360.0,992.8 366.9,992.8 377.2,971.2 381.6,977.2 385.9,979.0 394.5,982.4 406.6,994.5 413.4,1003.1 422.1,999.7 432.4,997.9 446.2,1004.8 449.7,997.1 458.3,999.7 470.3,1008.3 480.7,1013.4 487.6,1003.1 496.2,1008.3 506.6,1018.6 513.4,1020.3 522.1,1011.7 528.1,1011.7 535.0,1002.2 542.8,1008.3 549.7,1022.1 556.6,1037.6 565.2,1034.1 570.3,1031.6 579.0,1035.9 592.8,1037.6 604.8,1060.0 614.3,1037.6 622.1,1046.2 629.0,1044.5 635.9,1039.3 644.5,1046.2 650.0,1040.7 650.0,1041.4 657.8,1034.5 662.1,1019.8 672.4,1021.6 679.3,1010.3 691.4,1004.3 701.7,1000.9 708.6,1010.3 723.3,981.9 734.5,993.1 743.1,1005.2 755.2,1020.7 765.5,1020.7 770.7,1033.6 777.6,1033.6 782.8,1051.7 787.9,1077.6 794.8,1063.8 801.7,1068.1 808.6,1074.1 815.5,1075.0 822.4,1072.4 832.8,1081.0 843.1,1084.5 853.4,1089.7 863.8,1089.7 869.0,1100.0 875.9,1101.7 884.5,1101.7 889.7,1106.0 898.3,1096.6 903.4,1094.8 910.3,1100.0 920.7,1093.1 927.6,1094.8 932.8,1110.3 940.0,1113.4 940.0,1113.3 947.9,1110.7 953.2,1108.7 957.2,1115.9 967.7,1114.6 977.0,1112.6 983.6,1114.0 990.2,1109.3 998.1,1115.9 1008.6,1117.3 1016.5,1115.3 1021.8,1117.3 1027.1,1114.6 1035.0,1119.2 1040.3,1114.6 1049.5,1109.3 1058.8,1101.4 1061.4,1090.9 1072.0,1095.5 1081.2,1100.8 1087.8,1099.4 1097.1,1101.4 1107.6,1108.0 1118.2,1101.4 1127.4,1090.9 1136.6,1068.4 1145.9,1076.3 1153.8,1070.4 1161.7,1067.8 1172.3,1081.0 1178.9,1080.3 1186.8,1086.9 1196.0,1088.2 1201.3,1092.8 1210.6,1082.9 1218.5,1075.0 1226.4,1086.9 1230.0,1092.3 1230.0,1088.2 1236.6,1098.8 1248.5,1105.4 1256.4,1103.4 1265.6,1105.4 1274.9,1112.6 1284.1,1104.1 1288.1,1110.7 1296.0,1112.0 1302.6,1110.0 1311.8,1112.0 1322.4,1114.0 1326.3,1115.3 1334.3,1116.6 1344.8,1117.9 1352.7,1121.2 1358.0,1120.6 1369.9,1122.5 1379.1,1125.2 1389.7,1126.5 1395.0,1129.8 1405.5,1135.7 1410.2,1154.2 1414.8,1122.5 1422.7,1112.6 1429.3,1115.3 1437.2,1108.7 1447.8,1114.6 1457.0,1106.0 1466.2,1114.6 1474.2,1111.3 1478.1,1114.0 1483.4,1110.7 1492.6,1108.7 1500.6,1113.3 1511.1,1114.0 1519.0,1111.3 1520.0,1111.2 1520.0,1111.8 1525.3,1109.8 1530.6,1113.1 1538.5,1115.1 1549.0,1117.1 1557.0,1120.4 1563.6,1118.4 1571.5,1103.9 1580.7,1097.3 1588.6,1106.5 1593.9,1111.8 1601.8,1115.8 1607.1,1125.0 1612.4,1127.7 1618.3,1115.8 1624.3,1117.8 1632.2,1119.1 1636.1,1130.3 1642.7,1127.0 1650.7,1129.0 1657.3,1127.0 1665.2,1140.9 1671.8,1132.9 1683.7,1131.0 1721.9,1131.0 1727.2,1134.9 1737.8,1132.3 1751.0,1132.9 1761.5,1131.0 1770.8,1134.3 1781.3,1132.3 1790.6,1134.3 1798.5,1134.9 1807.7,1126.3 1810.0,1127.5 1810.0,1126.5 1816.6,1129.8 1827.2,1129.2 1833.8,1125.2 1849.6,1125.2 1942.0,1125.2 1994.8,1125.2 2008.0,1124.6 2039.6,1125.2 2046.2,1129.2 2051.5,1123.9 2076.6,1123.2 2084.5,1128.5 2090.0,1128.7 2090.0,1128.8 2127.9,1128.8 2132.5,1131.1 2137.1,1128.8 2143.6,1128.8 2147.3,1133.0 2150.1,1143.1 2173.1,1144.1 2182.4,1142.7 2194.4,1139.9 2200.9,1142.7 2228.6,1143.6 2233.2,1147.8 2239.7,1148.7 2245.2,1147.3 2248.9,1152.4 2256.3,1154.2 2284.0,1153.3" fill="none" stroke="#34495e" stroke-width="4" stroke-linejoin="round" stroke-linecap="round"/>
<polyline points="76.9,822.9 80.2,858.4 81.1,862.0 82.9,870.0 86.6,872.1 88.5,876.7 91.7,879.2 97.7,873.1 100.5,870.1 104.2,869.9 105.1,869.1 107.9,865.6 108.8,865.4 112.5,876.2 114.3,881.9 119.0,897.5 122.7,889.6 123.6,888.3 129.1,890.1 130.1,889.9 133.7,883.7 136.5,879.9 139.3,879.0 143.9,877.1 151.3,877.1 155.0,866.8 156.8,863.5 161.5,865.4 163.3,864.2 166.1,852.9 167.9,847.3 169.8,848.8 176.2,856.3 186.4,833.1 190.1,823.4 193.8,813.2 194.7,813.2 201.2,817.4 208.6,839.9 212.3,833.6 214.1,831.7 216.9,839.3 221.5,856.7 227.1,866.7 229.8,866.3 231.7,866.1 236.3,869.8 240.9,868.3 245.5,856.8 251.1,869.8 258.5,859.3 259.4,860.1 264.0,871.0 267.7,880.6 268.0,881.9 268.0,871.5 273.0,912.5 274.3,927.4 276.9,960.5 278.2,964.7 284.6,968.5 297.6,956.4 298.9,958.3 304.0,973.4 310.5,972.1 313.1,973.0 319.5,985.3 320.8,986.2 327.3,971.1 328.6,969.7 332.5,975.8 333.8,976.2 337.6,971.2 345.4,965.8 354.5,976.9 355.8,977.1 359.6,971.5 360.0,971.1 360.0,972.1 366.0,971.0 366.9,970.0 369.5,963.1 373.8,954.5 377.2,949.8 379.0,951.7 381.6,955.5 385.9,956.5 393.6,961.0 394.5,961.1 397.1,962.8 404.0,969.4 406.6,973.1 407.4,974.5 413.4,981.4 417.8,979.7 422.1,977.5 423.8,977.0 427.2,977.3 432.4,975.7 435.9,978.7 446.2,979.7 449.7,974.7 456.6,976.8 458.3,977.3 460.9,978.7 467.8,985.3 470.3,986.7 479.0,990.1 480.7,990.3 487.6,981.3 488.4,981.5 496.2,986.6 503.1,993.4 506.6,995.8 511.7,996.5 513.4,996.8 522.1,990.8 528.1,990.5 532.4,986.1 535.0,984.2 541.0,988.7 542.8,990.2 549.7,1001.9 551.4,1005.1 556.6,1018.2 557.4,1018.7 561.7,1018.0 565.2,1016.7 568.6,1015.1 570.3,1014.9 575.5,1018.1 579.0,1019.5 584.1,1020.3 590.2,1019.8 592.8,1021.0 595.3,1025.4 604.8,1045.5 614.3,1022.1 622.1,1030.7 629.0,1028.4 635.9,1023.3 644.5,1030.2 650.0,1022.3 650.0,1023.3 656.9,1014.8 657.8,1013.5 662.1,999.1 672.4,1003.2 679.3,990.9 684.5,989.9 691.4,986.2 696.6,986.0 701.7,985.0 705.2,988.4 708.6,993.0 709.5,992.1 717.2,977.4 723.3,966.1 734.5,976.3 739.7,984.5 743.1,988.8 748.3,994.8 755.2,1003.1 756.0,1003.4 765.5,1001.7 766.4,1003.1 770.7,1014.5 776.7,1014.0 777.6,1015.0 782.8,1034.1 787.9,1057.9 791.4,1054.7 794.8,1047.1 795.7,1046.8 801.7,1051.3 808.6,1058.9 815.5,1057.9 816.4,1057.4 822.4,1054.3 823.3,1054.6 832.8,1063.7 843.1,1066.4 853.4,1072.6 863.8,1072.8 867.2,1080.5 869.0,1083.0 874.1,1084.1 875.9,1084.9 882.8,1086.7 884.5,1087.3 889.7,1092.0 891.4,1091.3 898.3,1082.3 899.1,1081.6 903.4,1082.7 906.9,1081.1 910.3,1083.4 915.5,1081.8 920.7,1080.6 925.9,1082.6 927.6,1083.8 932.8,1097.4 939.7,1100.2 940.0,1100.3 940.0,1100.2 947.9,1097.8 953.2,1095.2 957.2,1102.5 963.8,1100.7 967.7,1101.0 975.6,1098.4 977.0,1098.3 983.6,1099.9 988.8,1095.9 990.2,1095.5 996.8,1100.5 998.1,1101.3 1003.3,1101.8 1007.3,1101.7 1008.6,1101.9 1016.5,1101.0 1019.2,1101.9 1021.8,1102.5 1025.8,1101.0 1027.1,1100.8 1033.7,1104.8 1035.0,1105.0 1040.3,1100.2 1045.6,1098.1 1049.5,1094.9 1052.2,1092.3 1057.5,1088.6 1058.8,1086.7 1061.4,1077.2 1066.7,1078.8 1072.0,1080.0 1081.2,1085.6 1082.5,1085.7 1086.5,1084.4 1087.8,1084.3 1095.7,1085.8 1097.1,1086.3 1107.6,1093.2 1118.2,1085.8 1127.4,1073.8 1134.0,1061.0 1136.6,1051.0 1141.9,1054.8 1145.9,1058.2 1147.2,1057.8 1153.8,1051.4 1161.7,1048.4 1172.3,1061.8 1178.9,1060.3 1186.8,1067.5 1196.0,1067.6 1201.3,1072.2 1210.6,1063.0 1218.5,1055.9 1226.4,1067.9 1230.0,1073.6 1230.0,1070.2 1236.6,1081.6 1237.9,1082.8 1247.2,1084.7 1248.5,1085.5 1256.4,1085.1 1259.0,1085.9 1265.6,1088.4 1274.9,1096.3 1284.1,1088.8 1288.1,1095.4 1290.7,1096.7 1296.0,1096.5 1302.6,1093.8 1309.2,1096.2 1311.8,1096.7 1319.7,1098.1 1322.4,1099.6 1323.7,1100.5 1326.3,1100.6 1327.7,1100.4 1334.3,1102.3 1338.2,1103.3 1344.8,1103.3 1348.8,1104.1 1352.7,1107.0 1356.7,1106.0 1358.0,1106.1 1363.3,1107.7 1369.9,1108.3 1371.2,1108.5 1379.1,1111.5 1389.7,1114.4 1392.3,1116.1 1395.0,1118.5 1397.6,1120.8 1402.9,1123.2 1405.5,1126.0 1406.9,1130.6 1410.2,1144.1 1414.8,1117.2 1420.0,1107.5 1422.7,1105.8 1424.0,1106.5 1429.3,1107.3 1433.2,1104.1 1437.2,1098.8 1438.5,1098.3 1443.8,1100.2 1447.8,1102.9 1449.1,1102.4 1457.0,1093.3 1463.6,1098.3 1466.2,1099.5 1471.5,1097.0 1474.2,1094.6 1475.5,1094.4 1478.1,1096.5 1479.4,1096.5 1483.4,1093.2 1490.0,1094.1 1492.6,1091.7 1500.6,1098.0 1511.1,1099.3 1519.0,1095.0 1520.0,1094.6 1520.0,1095.4 1525.3,1092.3 1529.2,1094.8 1530.6,1094.9 1533.2,1094.4 1538.5,1095.0 1539.8,1095.1 1547.7,1098.9 1549.0,1098.5 1550.4,1098.3 1557.0,1101.1 1559.6,1101.2 1563.6,1100.3 1564.9,1098.9 1571.5,1087.5 1572.8,1086.0 1579.4,1081.4 1580.7,1081.2 1583.3,1083.6 1588.6,1090.2 1591.3,1093.2 1593.9,1096.0 1599.2,1100.2 1601.8,1101.9 1604.5,1105.3 1607.1,1109.1 1612.4,1113.3 1618.3,1102.6 1622.9,1105.6 1624.3,1106.0 1632.2,1108.0 1633.5,1110.0 1636.1,1112.1 1640.1,1108.9 1642.7,1108.2 1644.1,1108.3 1649.3,1111.5 1650.7,1111.5 1655.9,1110.0 1657.3,1110.5 1661.2,1115.7 1665.2,1124.5 1671.8,1116.4 1679.7,1118.6 1683.7,1116.7 1687.6,1119.7 1721.9,1120.2 1727.2,1123.5 1737.8,1120.3 1744.4,1117.3 1751.0,1117.1 1752.3,1116.8 1758.9,1114.3 1761.5,1114.5 1768.1,1116.5 1770.8,1117.4 1773.4,1117.5 1781.3,1114.0 1790.6,1116.6 1798.5,1121.4 1807.7,1111.4 1810.0,1113.2 1810.0,1115.3 1816.6,1118.0 1823.2,1118.0 1833.8,1113.3 1849.6,1115.3 1862.8,1115.3 1869.4,1117.3 1889.2,1117.3 1902.4,1118.0 1928.8,1116.6 1947.3,1118.0 1960.5,1114.7 1973.7,1110.7 1981.6,1108.1 1994.8,1115.3 2004.0,1118.6 2014.6,1110.7 2021.2,1116.0 2026.4,1113.3 2046.2,1114.7 2081.9,1114.7 2087.2,1123.2 2090.0,1122.1 2090.0,1122.8 2094.6,1120.1 2110.3,1120.1 2117.7,1127.9 2124.2,1121.9 2133.4,1121.4 2137.1,1124.7 2139.9,1120.5 2143.6,1121.9 2148.2,1128.4 2150.1,1140.4 2176.8,1141.3 2182.4,1137.6 2187.9,1134.8 2195.3,1135.8 2200.9,1141.3 2228.6,1141.8 2234.1,1143.1 2239.7,1148.2 2244.3,1142.7 2250.8,1152.4 2265.5,1153.3 2274.8,1149.6 2284.0,1149.6" fill="none" stroke="#5ac57a" stroke-width="4" stroke-linejoin="round" stroke-linecap="round"/>
<polyline points="76.9,815.9 80.2,848.9 81.1,853.9 82.9,865.2 86.6,863.7 88.5,869.1 91.7,874.7 97.7,866.4 100.5,862.3 104.2,863.6 105.1,862.8 107.9,859.3 108.8,859.7 112.5,869.5 114.3,874.7 119.0,889.0 122.7,881.3 123.6,880.5 129.1,882.5 130.1,881.8 133.7,875.7 136.5,872.7 139.3,871.7 143.9,869.2 151.3,871.2 155.0,860.1 156.8,857.8 161.5,859.1 163.3,856.4 166.1,845.6 167.9,841.9 169.8,843.1 176.2,851.5 186.4,828.9 190.1,820.7 193.8,811.9 194.7,811.4 201.2,815.2 208.6,835.8 212.3,829.5 214.1,828.4 216.9,834.0 221.5,851.4 227.1,860.6 229.8,861.2 231.7,861.7 236.3,865.6 240.9,860.7 245.5,848.9 251.1,863.3 258.5,851.2 259.4,851.2 264.0,862.7 267.7,869.6 268.0,871.1 268.0,866.2 273.0,903.4 274.3,916.0 276.9,946.8 278.2,953.8 284.6,958.8 297.6,943.5 298.9,944.1 304.0,959.8 310.5,958.9 313.1,960.8 319.5,972.8 320.8,972.5 327.3,957.4 328.6,957.1 332.5,963.4 333.8,962.7 337.6,956.2 345.4,951.3 354.5,963.9 355.8,964.7 359.6,956.4 360.0,955.9 360.0,956.9 366.0,955.1 366.9,953.3 369.5,945.3 373.8,937.0 377.2,934.1 379.0,935.6 381.6,939.6 385.9,940.0 393.6,945.5 394.5,945.5 397.1,946.4 404.0,952.9 406.6,957.5 407.4,959.1 413.4,965.4 417.8,963.7 422.1,961.3 423.8,960.5 427.2,961.6 432.4,959.4 435.9,963.3 446.2,961.3 449.7,958.2 456.6,960.4 458.3,960.8 460.9,962.0 467.8,969.7 470.3,970.8 479.0,973.6 480.7,973.3 487.6,965.4 488.4,965.2 496.2,970.6 503.1,977.5 506.6,979.0 511.7,979.3 513.4,979.6 522.1,975.4 528.1,974.9 532.4,971.7 535.0,970.9 541.0,975.4 542.8,976.9 549.7,987.1 551.4,989.9 556.6,1003.9 557.4,1005.1 561.7,1005.2 565.2,1003.9 568.6,1002.4 570.3,1002.8 575.5,1006.3 579.0,1007.5 584.1,1008.4 590.2,1006.9 592.8,1008.9 595.3,1013.0 604.8,1034.9 614.3,1010.7 622.1,1019.3 629.0,1016.7 635.9,1011.5 644.5,1018.4 650.0,1008.9 650.0,1010.0 656.9,999.9 657.8,998.1 662.1,984.0 672.4,989.7 679.3,976.7 684.5,976.8 691.4,972.9 696.6,973.9 701.7,973.3 705.2,975.8 708.6,980.2 709.5,980.0 717.2,965.6 723.3,954.6 734.5,964.0 739.7,972.8 743.1,976.8 748.3,982.4 755.2,990.2 756.0,990.7 765.5,987.8 766.4,988.6 770.7,1000.4 776.7,999.6 777.6,1001.4 782.8,1021.2 787.9,1043.5 791.4,1042.9 794.8,1034.9 795.7,1034.0 801.7,1039.0 808.6,1047.7 815.5,1045.3 816.4,1044.8 822.4,1041.0 823.3,1040.9 832.8,1051.0 843.1,1053.1 853.4,1060.1 863.8,1060.5 867.2,1068.8 869.0,1070.5 874.1,1071.5 875.9,1072.5 882.8,1075.7 884.5,1076.7 889.7,1081.7 891.4,1081.8 898.3,1071.8 899.1,1070.9 903.4,1073.8 906.9,1069.2 910.3,1071.3 915.5,1071.0 920.7,1071.4 925.9,1074.0 927.6,1075.8 932.8,1087.9 939.7,1090.7 940.0,1090.7 940.0,1090.7 947.9,1088.4 953.2,1085.3 957.2,1092.6 963.8,1090.1 967.7,1090.9 975.6,1087.7 977.0,1087.8 983.6,1089.6 988.8,1085.4 990.2,1085.4 996.8,1090.0 998.1,1090.5 1003.3,1090.9 1007.3,1090.4 1008.6,1090.6 1016.5,1090.6 1019.2,1091.4 1021.8,1091.7 1025.8,1090.6 1027.1,1090.7 1033.7,1094.8 1035.0,1094.5 1040.3,1089.6 1045.6,1088.1 1049.5,1084.4 1052.2,1081.5 1057.5,1078.3 1058.8,1075.9 1061.4,1067.2 1066.7,1068.3 1072.0,1068.7 1081.2,1074.6 1082.5,1074.9 1086.5,1073.1 1087.8,1073.1 1095.7,1074.5 1097.1,1075.2 1107.6,1082.3 1118.2,1074.3 1127.4,1061.4 1134.0,1050.9 1136.6,1038.2 1141.9,1041.4 1145.9,1044.9 1147.2,1045.0 1153.8,1037.5 1161.7,1034.1 1172.3,1047.7 1178.9,1045.6 1186.8,1053.3 1196.0,1052.5 1201.3,1057.0 1210.6,1047.7 1218.5,1040.7 1226.4,1052.2 1230.0,1058.0 1230.0,1055.1 1236.6,1066.6 1237.9,1068.2 1247.2,1066.4 1248.5,1067.1 1256.4,1067.4 1259.0,1068.2 1265.6,1071.0 1274.9,1079.3 1284.1,1073.3 1288.1,1080.0 1290.7,1082.3 1296.0,1081.1 1302.6,1077.9 1309.2,1081.5 1311.8,1082.1 1319.7,1083.6 1322.4,1086.1 1323.7,1087.5 1326.3,1086.8 1327.7,1086.4 1334.3,1089.1 1338.2,1090.7 1344.8,1090.1 1348.8,1090.3 1352.7,1094.4 1356.7,1093.1 1358.0,1093.4 1363.3,1095.7 1369.9,1096.0 1371.2,1096.1 1379.1,1099.9 1389.7,1104.3 1392.3,1106.1 1395.0,1109.2 1397.6,1112.2 1402.9,1114.2 1405.5,1118.0 1406.9,1122.1 1410.2,1135.9 1414.8,1113.0 1420.0,1100.8 1422.7,1100.3 1424.0,1101.1 1429.3,1101.0 1433.2,1097.9 1437.2,1091.0 1438.5,1089.6 1443.8,1090.8 1447.8,1093.8 1449.1,1093.9 1457.0,1083.5 1463.6,1087.9 1466.2,1088.1 1471.5,1085.5 1474.2,1082.5 1475.5,1081.6 1478.1,1084.3 1479.4,1084.9 1483.4,1081.5 1490.0,1084.5 1492.6,1081.2 1500.6,1089.0 1511.1,1091.4 1519.0,1086.8 1520.0,1086.3 1520.0,1087.1 1525.3,1083.9 1529.2,1086.7 1530.6,1086.5 1533.2,1085.7 1538.5,1086.4 1539.8,1086.6 1547.7,1091.7 1549.0,1091.2 1550.4,1090.8 1557.0,1094.0 1559.6,1094.5 1563.6,1094.0 1564.9,1093.0 1571.5,1082.1 1572.8,1080.5 1579.4,1076.1 1580.7,1076.3 1583.3,1078.5 1588.6,1085.3 1591.3,1088.6 1593.9,1091.4 1599.2,1096.2 1601.8,1098.1 1604.5,1101.2 1607.1,1104.8 1612.4,1109.6 1618.3,1099.3 1622.9,1102.7 1624.3,1103.2 1632.2,1105.4 1633.5,1107.0 1636.1,1107.9 1640.1,1104.5 1642.7,1104.0 1644.1,1104.1 1649.3,1107.9 1650.7,1107.8 1655.9,1106.4 1657.3,1107.2 1661.2,1112.0 1665.2,1121.3 1671.8,1113.3 1679.7,1116.3 1683.7,1114.2 1687.6,1117.8 1721.9,1118.4 1727.2,1121.6 1737.8,1118.3 1744.4,1114.8 1751.0,1114.4 1752.3,1114.2 1758.9,1111.5 1761.5,1111.7 1768.1,1113.7 1770.8,1114.6 1773.4,1114.9 1781.3,1110.9 1790.6,1113.6 1798.5,1119.2 1807.7,1109.0 1810.0,1110.9 1810.0,1113.3 1816.6,1116.0 1823.2,1116.6 1833.8,1110.1 1849.6,1113.3 1862.8,1111.4 1869.4,1112.0 1877.3,1112.0 1885.2,1114.7 1891.8,1115.3 1902.4,1112.0 1912.9,1110.7 1928.8,1112.0 1947.3,1115.3 1960.5,1112.0 1973.7,1101.5 1981.6,1097.5 1994.8,1104.1 2006.6,1113.3 2014.6,1099.5 2021.2,1105.4 2025.1,1101.5 2033.0,1111.4 2039.6,1102.1 2046.2,1125.9 2054.2,1105.4 2060.8,1106.8 2066.0,1112.0 2072.6,1105.4 2077.9,1113.3 2087.2,1114.7 2090.0,1114.7 2090.0,1114.5 2143.6,1114.5 2151.9,1126.5 2162.1,1126.5 2165.8,1129.3 2177.8,1128.4 2182.4,1129.3 2186.1,1133.0 2205.5,1136.7 2212.9,1138.5 2237.8,1143.1 2256.3,1150.1 2274.8,1150.1 2277.5,1146.8 2284.0,1146.8" fill="none" stroke="#e0833a" stroke-width="4" stroke-linejoin="round" stroke-linecap="round"/>
<polyline points="76.9,809.9 80.2,840.8 81.1,846.9 82.9,861.0 86.6,856.5 88.5,862.5 91.7,870.8 97.7,860.5 100.5,855.6 104.2,858.3 105.1,857.3 107.9,853.8 108.8,854.8 112.5,863.6 114.3,868.6 119.0,881.6 122.7,874.0 123.6,873.7 129.1,875.9 130.1,874.9 133.7,868.9 136.5,866.5 139.3,865.3 143.9,862.3 151.3,866.1 155.0,854.3 156.8,852.9 161.5,853.7 163.3,849.5 166.1,839.3 167.9,837.3 169.8,838.2 176.2,847.2 186.4,825.2 190.1,818.4 193.8,810.7 194.7,809.9 201.2,813.3 208.6,832.3 212.3,825.9 214.1,825.6 216.9,829.4 221.5,846.9 227.1,855.3 229.8,856.8 231.7,857.8 236.3,862.0 240.9,854.1 245.5,842.0 251.1,857.7 258.5,844.2 259.4,843.4 264.0,855.5 267.7,860.0 268.0,861.7 268.0,861.5 273.0,895.6 274.3,906.2 276.9,935.1 278.2,944.4 284.6,950.5 297.6,932.4 298.9,931.9 304.0,948.0 310.5,947.4 313.1,950.4 319.5,962.0 320.8,960.6 327.3,945.5 328.6,946.3 332.5,952.8 333.8,951.0 337.6,943.3 345.4,938.8 354.5,952.6 355.8,954.1 359.6,943.4 360.0,942.8 360.0,943.8 366.0,941.3 366.9,938.9 369.5,930.0 373.8,921.9 377.2,920.6 379.0,921.7 381.6,925.8 385.9,925.7 393.6,932.1 394.5,932.1 397.1,932.4 404.0,938.6 406.6,944.0 407.4,945.8 413.4,951.7 417.8,950.0 422.1,947.3 423.8,946.3 427.2,948.0 432.4,945.3 435.9,950.1 446.2,945.5 449.7,944.0 456.6,946.3 458.3,946.6 460.9,947.6 467.8,956.3 470.3,957.1 479.0,959.3 480.7,958.6 487.6,951.6 488.4,951.2 496.2,956.9 503.1,963.8 506.6,964.5 511.7,964.5 513.4,964.6 522.1,962.1 528.1,961.4 532.4,959.2 535.0,959.5 541.0,963.8 542.8,965.4 549.7,974.3 551.4,976.7 556.6,991.6 557.4,993.4 561.7,994.1 565.2,992.8 568.6,991.4 570.3,992.2 575.5,996.2 579.0,997.2 584.1,998.1 590.2,995.9 592.8,998.4 595.3,1002.3 604.8,1025.7 614.3,1000.9 622.1,1009.5 629.0,1006.5 635.9,1001.4 644.5,1008.3 650.0,997.3 650.0,998.5 656.9,987.0 657.8,984.8 662.1,970.9 672.4,978.1 679.3,964.4 684.5,965.5 691.4,961.5 696.6,963.4 701.7,963.3 705.2,964.9 708.6,969.2 709.5,969.5 717.2,955.3 723.3,944.6 734.5,953.3 739.7,962.8 743.1,966.4 748.3,971.6 755.2,979.1 756.0,979.7 765.5,975.8 766.4,976.0 770.7,988.3 776.7,987.1 777.6,989.6 782.8,1010.1 787.9,1031.1 791.4,1032.7 794.8,1024.4 795.7,1022.9 801.7,1028.3 808.6,1038.0 815.5,1034.5 816.4,1033.9 822.4,1029.5 823.3,1029.2 832.8,1040.0 843.1,1041.6 853.4,1049.3 863.8,1049.9 867.2,1058.6 869.0,1059.8 874.1,1060.6 875.9,1061.8 882.8,1066.2 884.5,1067.6 889.7,1072.9 891.4,1073.7 898.3,1062.8 899.1,1061.6 903.4,1066.1 906.9,1058.9 910.3,1060.8 915.5,1061.7 920.7,1063.4 925.9,1066.5 927.6,1068.8 932.8,1079.7 939.7,1082.4 940.0,1082.4 940.0,1082.4 947.9,1080.2 953.2,1076.8 957.2,1084.1 963.8,1081.0 967.7,1082.3 975.6,1078.5 977.0,1078.7 983.6,1080.7 988.8,1076.3 990.2,1076.6 996.8,1080.9 998.1,1081.3 1003.3,1081.5 1007.3,1080.7 1008.6,1080.9 1016.5,1081.6 1019.2,1082.3 1021.8,1082.4 1025.8,1081.5 1027.1,1082.0 1033.7,1086.2 1035.0,1085.5 1040.3,1080.4 1045.6,1079.5 1049.5,1075.2 1052.2,1072.1 1057.5,1069.4 1058.8,1066.6 1061.4,1058.5 1066.7,1059.2 1072.0,1058.9 1081.2,1065.0 1082.5,1065.5 1086.5,1063.4 1087.8,1063.5 1095.7,1064.8 1097.1,1065.6 1107.6,1072.9 1118.2,1064.4 1127.4,1050.6 1134.0,1042.2 1136.6,1027.2 1141.9,1029.9 1145.9,1033.4 1147.2,1033.9 1153.8,1025.4 1161.7,1021.9 1172.3,1035.5 1178.9,1033.0 1186.8,1041.0 1196.0,1039.5 1201.3,1043.8 1210.6,1034.3 1218.5,1027.2 1226.4,1038.1 1230.0,1043.9 1230.0,1041.6 1236.6,1053.1 1237.9,1054.9 1247.2,1049.6 1248.5,1050.1 1256.4,1050.9 1259.0,1051.6 1265.6,1054.5 1274.9,1063.3 1284.1,1058.7 1288.1,1065.6 1290.7,1068.8 1296.0,1066.8 1302.6,1063.2 1309.2,1068.0 1311.8,1068.6 1319.7,1070.4 1322.4,1073.8 1323.7,1075.7 1326.3,1074.4 1327.7,1073.7 1334.3,1077.3 1338.2,1079.4 1344.8,1078.4 1348.8,1078.1 1352.7,1083.3 1356.7,1081.7 1358.0,1082.3 1363.3,1085.2 1369.9,1085.3 1371.2,1085.4 1379.1,1089.8 1389.7,1095.7 1392.3,1097.6 1395.0,1101.3 1397.6,1104.9 1402.9,1106.5 1405.5,1111.2 1406.9,1114.9 1410.2,1129.0 1414.8,1109.4 1420.0,1095.2 1422.7,1095.8 1424.0,1096.7 1429.3,1095.8 1433.2,1092.9 1437.2,1084.7 1438.5,1082.5 1443.8,1083.1 1447.8,1086.5 1449.1,1087.1 1457.0,1075.7 1463.6,1079.6 1466.2,1079.1 1471.5,1076.5 1474.2,1072.9 1475.5,1071.5 1478.1,1074.5 1479.4,1075.6 1483.4,1072.1 1490.0,1076.7 1492.6,1072.5 1500.6,1081.6 1511.1,1084.8 1519.0,1079.9 1520.0,1079.3 1520.0,1080.2 1525.3,1076.7 1529.2,1079.8 1530.6,1079.3 1533.2,1078.2 1538.5,1078.9 1539.8,1079.1 1547.7,1085.4 1549.0,1084.7 1550.4,1084.1 1557.0,1087.6 1559.6,1088.5 1563.6,1088.2 1564.9,1087.6 1571.5,1077.2 1572.8,1075.4 1579.4,1071.2 1580.7,1071.6 1583.3,1073.7 1588.6,1080.8 1591.3,1084.2 1593.9,1087.2 1599.2,1092.4 1601.8,1094.5 1604.5,1097.3 1607.1,1100.7 1612.4,1106.0 1618.3,1096.1 1622.9,1099.9 1624.3,1100.4 1632.2,1102.9 1633.5,1104.2 1636.1,1103.8 1640.1,1100.3 1642.7,1099.9 1644.1,1100.0 1649.3,1104.3 1650.7,1104.2 1655.9,1102.9 1657.3,1103.9 1661.2,1108.4 1665.2,1118.2 1671.8,1110.2 1679.7,1114.0 1683.7,1111.7 1687.6,1115.9 1721.9,1115.9 1727.2,1118.8 1737.8,1115.2 1744.4,1110.6 1751.0,1109.8 1752.3,1109.6 1758.9,1106.2 1761.5,1106.6 1768.1,1108.2 1770.8,1108.9 1773.4,1109.4 1781.3,1104.4 1790.6,1106.9 1798.5,1113.8 1807.7,1102.7 1810.0,1104.9 1810.0,1108.1 1816.6,1113.3 1823.2,1113.3 1833.8,1105.4 1843.0,1108.1 1849.6,1110.1 1862.8,1110.1 1869.4,1106.1 1877.3,1106.1 1885.2,1110.7 1891.8,1113.3 1898.4,1111.4 1905.0,1108.1 1912.9,1106.8 1928.8,1108.1 1947.3,1112.7 1960.5,1108.1 1973.7,1092.2 1981.6,1089.6 1994.8,1094.9 2006.6,1102.8 2014.6,1088.9 2021.2,1094.9 2025.1,1090.3 2033.0,1102.8 2039.6,1095.5 2044.9,1108.1 2051.5,1100.2 2060.8,1110.1 2067.4,1100.2 2074.0,1107.4 2080.6,1108.1 2090.0,1108.1 2090.0,1109.0 2100.2,1109.0 2107.6,1117.7 2114.0,1109.0 2145.4,1109.0 2151.0,1113.6 2161.1,1113.6 2170.4,1126.1 2175.9,1120.1 2182.4,1125.6 2189.8,1129.3 2210.1,1132.1 2212.9,1133.0 2233.2,1135.8 2241.5,1141.3 2244.3,1135.8 2249.8,1143.1 2256.3,1147.8 2270.2,1148.7 2275.7,1144.1 2284.0,1144.1" fill="none" stroke="#7f8c8d" stroke-width="4" stroke-linejoin="round" stroke-linecap="round"/>
<polyline points="76.9,804.4 80.2,833.5 81.1,840.6 82.9,857.3 86.6,850.0 88.5,856.6 91.7,867.3 97.7,855.3 100.5,849.7 104.2,853.4 105.1,852.4 107.9,848.9 108.8,850.4 112.5,858.4 114.3,863.1 119.0,875.0 122.7,867.6 123.6,867.7 129.1,869.9 130.1,868.7 133.7,862.7 136.5,860.9 139.3,859.6 143.9,856.2 151.3,861.6 155.0,849.1 156.8,848.5 161.5,848.9 163.3,843.5 166.1,833.7 167.9,833.1 169.8,833.8 176.2,843.5 186.4,821.9 190.1,816.4 193.8,809.7 194.7,808.5 201.2,811.5 208.6,829.2 212.3,822.7 214.1,823.0 216.9,825.2 221.5,842.8 227.1,850.6 229.8,852.8 231.7,854.3 236.3,858.8 240.9,848.2 245.5,835.9 251.1,852.7 258.5,837.9 259.4,836.5 264.0,849.1 267.7,851.5 268.0,853.3 268.0,857.4 273.0,888.6 274.3,897.4 276.9,924.5 278.2,935.9 284.6,943.0 297.6,922.4 298.9,920.9 304.0,937.4 310.5,937.2 313.1,941.0 319.5,952.3 320.8,950.0 327.3,934.9 328.6,936.5 332.5,943.2 333.8,940.6 337.6,931.7 345.4,927.6 354.5,942.6 355.8,944.5 359.6,931.7 360.0,931.0 360.0,932.1 366.0,929.0 366.9,926.0 369.5,916.2 373.8,908.3 377.2,908.5 379.0,909.3 381.6,913.5 385.9,913.0 393.6,920.2 394.5,920.0 397.1,919.8 404.0,925.9 406.6,931.9 407.4,933.9 413.4,939.4 417.8,937.7 422.1,934.7 423.8,933.6 427.2,935.8 432.4,932.7 435.9,938.2 446.2,931.2 449.7,931.3 456.6,933.6 458.3,934.0 460.9,934.6 467.8,944.3 470.3,944.9 479.0,946.6 480.7,945.4 487.6,939.2 488.4,938.7 496.2,944.6 503.1,951.4 506.6,951.6 511.7,951.3 513.4,951.3 522.1,950.3 528.1,949.4 532.4,948.0 535.0,949.2 541.0,953.5 542.8,955.2 549.7,962.9 551.4,964.9 556.6,980.6 557.4,982.9 561.7,984.2 565.2,982.9 568.6,981.6 570.3,982.8 575.5,987.1 579.0,987.9 584.1,988.9 590.2,986.0 592.8,989.0 595.3,992.6 604.8,1017.5 614.3,992.1 622.1,1000.7 629.0,997.4 635.9,992.3 644.5,999.2 650.0,986.9 650.0,988.3 656.9,975.4 657.8,972.9 662.1,959.1 672.4,967.7 679.3,953.4 684.5,955.4 691.4,951.2 696.6,954.0 701.7,954.3 705.2,955.2 708.6,959.4 709.5,960.1 717.2,946.1 723.3,935.6 734.5,943.8 739.7,953.8 743.1,957.1 748.3,962.0 755.2,969.1 756.0,969.9 765.5,965.0 766.4,964.8 770.7,977.5 776.7,976.0 777.6,979.1 782.8,1000.1 787.9,1019.9 791.4,1023.7 794.8,1014.9 795.7,1013.0 801.7,1018.8 808.6,1029.4 815.5,1024.8 816.4,1024.1 822.4,1019.2 823.3,1018.6 832.8,1030.2 843.1,1031.4 853.4,1039.6 863.8,1040.3 867.2,1049.5 869.0,1050.1 874.1,1050.8 875.9,1052.3 882.8,1057.7 884.5,1059.4 889.7,1064.9 891.4,1066.4 898.3,1054.7 899.1,1053.3 903.4,1059.2 906.9,1049.6 910.3,1051.4 915.5,1053.3 920.7,1056.3 925.9,1059.9 927.6,1062.6 932.8,1072.4 939.7,1075.0 940.0,1075.0 940.0,1075.0 947.9,1072.9 953.2,1069.2 957.2,1076.4 963.8,1072.9 967.7,1074.5 975.6,1070.3 977.0,1070.6 983.6,1072.7 988.8,1068.2 990.2,1068.8 996.8,1072.8 998.1,1073.0 1003.3,1073.0 1007.3,1071.9 1008.6,1072.2 1016.5,1073.5 1019.2,1074.2 1021.8,1074.1 1025.8,1073.5 1027.1,1074.2 1033.7,1078.5 1035.0,1077.4 1040.3,1072.2 1045.6,1071.9 1049.5,1067.1 1052.2,1063.8 1057.5,1061.5 1058.8,1058.3 1061.4,1050.8 1066.7,1051.1 1072.0,1050.2 1081.2,1056.4 1082.5,1057.2 1086.5,1054.8 1087.8,1054.9 1095.7,1056.1 1097.1,1057.0 1107.6,1064.5 1118.2,1055.5 1127.4,1040.9 1134.0,1034.4 1136.6,1017.3 1141.9,1019.6 1145.9,1023.1 1147.2,1024.0 1153.8,1014.7 1161.7,1010.9 1172.3,1024.6 1178.9,1021.7 1186.8,1030.0 1196.0,1027.8 1201.3,1031.9 1210.6,1021.8 1218.5,1014.2 1226.4,1024.1 1230.0,1029.7 1230.0,1027.9 1236.6,1039.1 1237.9,1041.1 1247.2,1031.5 1248.5,1031.8 1256.4,1032.7 1259.0,1033.1 1265.6,1035.9 1274.9,1045.0 1284.1,1042.5 1288.1,1049.8 1290.7,1054.1 1296.0,1051.5 1302.6,1047.8 1309.2,1054.1 1311.8,1054.9 1319.7,1057.2 1322.4,1061.7 1323.7,1064.0 1326.3,1062.3 1327.7,1061.4 1334.3,1066.0 1338.2,1068.8 1344.8,1067.5 1348.8,1066.9 1352.7,1073.3 1356.7,1071.6 1358.0,1072.4 1363.3,1076.1 1369.9,1076.3 1371.2,1076.3 1379.1,1081.7 1389.7,1089.0 1392.3,1091.0 1395.0,1095.2 1397.6,1099.3 1402.9,1100.9 1405.5,1106.3 1406.9,1109.7 1410.2,1124.0 1414.8,1106.9 1420.0,1091.3 1422.7,1092.7 1424.0,1093.7 1429.3,1092.3 1433.2,1089.6 1437.2,1080.7 1438.5,1078.0 1443.8,1078.4 1447.8,1082.1 1449.1,1083.1 1457.0,1071.3 1463.6,1075.0 1466.2,1074.2 1471.5,1071.6 1474.2,1067.7 1475.5,1065.9 1478.1,1069.1 1479.4,1070.5 1483.4,1066.6 1490.0,1072.0 1492.6,1067.3 1500.6,1076.9 1511.1,1080.2 1519.0,1074.8 1520.0,1074.2 1520.0,1075.1 1525.3,1071.3 1529.2,1074.4 1530.6,1073.7 1533.2,1072.2 1538.5,1072.7 1539.8,1072.9 1547.7,1079.9 1549.0,1079.0 1550.4,1078.2 1557.0,1081.7 1559.6,1082.9 1563.6,1082.7 1564.9,1082.4 1571.5,1072.2 1572.8,1070.3 1579.4,1066.3 1580.7,1066.9 1583.3,1068.8 1588.6,1076.2 1591.3,1079.8 1593.9,1082.8 1599.2,1088.6 1601.8,1090.8 1604.5,1093.3 1607.1,1096.5 1612.4,1102.3 1618.3,1092.8 1622.9,1097.1 1624.3,1097.5 1632.2,1100.3 1633.5,1101.2 1636.1,1099.6 1640.1,1095.8 1642.7,1095.7 1644.1,1095.7 1649.3,1100.5 1650.7,1100.3 1655.9,1099.2 1657.3,1100.4 1661.2,1104.6 1665.2,1114.8 1671.8,1106.9 1679.7,1111.4 1683.7,1109.0 1687.6,1113.7 1721.9,1113.8 1727.2,1116.6 1737.8,1112.9 1744.4,1107.6 1751.0,1106.7 1752.3,1106.5 1758.9,1102.9 1761.5,1103.3 1768.1,1104.9 1770.8,1105.6 1773.4,1106.1 1781.3,1100.8 1790.6,1103.4 1798.5,1111.1 1807.7,1099.6 1810.0,1102.0 1810.0,1102.8 1816.6,1110.1 1823.2,1110.1 1833.8,1100.8 1843.0,1104.1 1849.6,1106.8 1862.8,1106.1 1869.4,1099.5 1877.3,1100.2 1885.2,1106.8 1891.8,1108.1 1898.4,1110.7 1905.0,1102.8 1912.9,1100.2 1928.8,1103.5 1935.4,1102.8 1947.3,1108.1 1955.2,1103.5 1960.5,1102.8 1973.7,1084.3 1981.6,1079.7 1986.9,1084.3 1994.8,1087.0 2006.6,1095.5 2014.6,1081.0 2021.2,1086.3 2025.1,1082.3 2033.0,1094.2 2039.6,1087.0 2044.9,1096.2 2058.1,1094.9 2063.4,1102.8 2072.6,1093.6 2084.5,1104.1 2089.8,1102.1 2090.0,1102.1 2090.0,1102.5 2141.7,1102.5 2160.2,1101.6 2168.5,1111.7 2175.9,1111.3 2182.4,1117.3 2189.8,1127.4 2197.2,1121.9 2210.1,1126.5 2212.9,1130.2 2228.6,1133.0 2247.1,1133.0 2256.3,1143.1 2265.5,1145.5 2274.8,1145.0 2277.5,1140.8 2284.0,1140.8" fill="none" stroke="#3b80bf" stroke-width="4" stroke-linejoin="round" stroke-linecap="round"/>
<polyline points="76.9,800.6 81.1,836.2 82.9,854.7 86.6,845.4 91.7,864.8 100.5,845.4 104.2,850.1 107.9,845.4 112.5,854.7 119.0,870.4 122.7,863.0 129.1,865.8 133.7,858.4 139.3,855.6 143.9,851.9 151.3,858.4 155.0,845.4 161.5,845.4 166.1,829.7 169.8,830.7 176.2,840.8 186.4,819.6 190.1,814.9 194.7,807.6 201.2,810.3 208.6,827.0 212.3,820.5 216.9,822.3 221.5,839.9 227.1,847.3 229.8,850.1 236.3,856.5 245.5,831.6 251.1,849.1 259.4,831.6 264.0,844.5 267.7,845.4 268.0,847.4 268.0,854.5 274.3,891.2 278.2,930.0 284.6,937.7 298.9,913.2 304.0,930.0 310.5,930.0 319.5,945.5 327.3,927.4 332.5,936.5 337.6,923.5 345.4,919.6 355.8,937.7 359.6,923.5 360.0,922.7 360.0,923.8 366.0,920.3 369.5,906.6 373.8,898.8 379.0,900.5 381.6,904.8 385.9,904.0 393.6,911.7 397.1,910.9 404.0,916.9 407.4,925.5 413.4,930.7 417.8,929.0 423.8,924.7 427.2,927.2 432.4,923.8 435.9,929.8 446.2,921.2 456.6,924.7 460.9,925.5 467.8,935.9 479.0,937.6 488.4,929.8 496.2,935.9 503.1,942.8 511.7,941.9 522.1,941.9 532.4,940.2 541.0,946.2 551.4,956.6 557.4,975.5 561.7,977.2 568.6,974.7 575.5,980.7 584.1,982.4 590.2,979.0 595.3,985.9 604.8,1011.7 614.3,985.9 622.1,994.5 629.0,991.0 635.9,985.9 644.5,992.8 650.0,979.5 650.0,981.0 656.9,967.2 662.1,950.9 672.4,960.3 679.3,945.7 684.5,948.3 691.4,944.0 696.6,947.4 705.2,948.3 709.5,953.4 717.2,939.7 723.3,929.3 734.5,937.1 739.7,947.4 748.3,955.2 756.0,962.9 766.4,956.9 770.7,969.8 776.7,968.1 782.8,993.1 787.9,1012.1 791.4,1017.2 795.7,1006.0 801.7,1012.1 808.6,1023.3 816.4,1017.2 823.3,1011.2 832.8,1023.3 843.1,1024.1 853.4,1032.8 863.8,1033.6 867.2,1043.1 874.1,1044.0 882.8,1051.7 891.4,1061.2 899.1,1047.4 903.4,1054.3 906.9,1043.1 915.5,1047.4 925.9,1055.2 932.8,1067.2 939.7,1069.8 940.0,1069.7 940.0,1069.7 947.9,1067.8 953.2,1063.8 957.2,1071.1 963.8,1067.1 967.7,1069.1 975.6,1064.5 983.6,1067.1 988.8,1062.5 996.8,1067.1 1003.3,1067.1 1007.3,1065.8 1019.2,1068.4 1025.8,1067.8 1033.7,1073.0 1040.3,1066.4 1045.6,1066.4 1052.2,1057.9 1057.5,1055.9 1061.4,1045.3 1066.7,1045.3 1072.0,1044.0 1082.5,1051.3 1086.5,1048.6 1095.7,1049.9 1107.6,1058.5 1118.2,1049.3 1127.4,1034.1 1134.0,1028.8 1136.6,1010.4 1141.9,1012.3 1147.2,1017.0 1153.8,1007.1 1161.7,1003.1 1172.3,1017.0 1178.9,1013.7 1186.8,1022.2 1196.0,1019.6 1201.3,1023.6 1210.6,1013.0 1218.5,1005.1 1226.4,1014.3 1230.0,1019.7 1230.0,1018.3 1237.9,1031.5 1247.2,1018.9 1259.0,1020.3 1265.6,1022.9 1274.9,1032.1 1284.1,1030.8 1290.7,1043.3 1296.0,1040.1 1302.6,1036.1 1309.2,1043.3 1319.7,1046.6 1323.7,1054.6 1327.7,1051.3 1338.2,1059.8 1348.8,1057.2 1352.7,1064.5 1356.7,1062.5 1363.3,1067.8 1371.2,1067.8 1379.1,1073.7 1392.3,1084.3 1397.6,1093.5 1402.9,1094.8 1406.9,1104.1 1410.2,1118.6 1414.8,1104.1 1420.0,1086.9 1424.0,1090.2 1429.3,1088.2 1433.2,1085.6 1438.5,1072.4 1443.8,1072.4 1449.1,1077.7 1457.0,1065.1 1463.6,1068.4 1471.5,1064.5 1475.5,1057.9 1479.4,1063.1 1483.4,1059.2 1490.0,1065.8 1492.6,1060.5 1500.6,1071.1 1511.1,1075.0 1520.0,1068.7 1520.0,1069.6 1525.3,1065.6 1529.2,1068.9 1533.2,1066.3 1539.8,1067.0 1547.7,1074.9 1550.4,1072.9 1559.6,1078.2 1564.9,1078.2 1572.8,1066.3 1579.4,1062.3 1583.3,1065.0 1591.3,1076.2 1599.2,1085.4 1604.5,1090.1 1612.4,1099.3 1618.3,1090.1 1622.9,1094.7 1633.5,1098.6 1640.1,1092.0 1644.1,1092.0 1649.3,1097.3 1655.9,1096.0 1661.2,1101.3 1665.2,1111.8 1671.8,1103.9 1679.7,1109.2 1683.7,1106.5 1687.6,1111.8 1721.9,1111.8 1727.2,1114.5 1737.8,1110.5 1744.4,1104.6 1752.3,1103.2 1758.9,1099.3 1768.1,1101.3 1773.4,1102.6 1781.3,1096.6 1790.6,1099.3 1798.5,1107.9 1807.7,1096.0 1810.0,1098.5 1810.0,1096.2 1816.6,1104.1 1823.2,1104.1 1833.8,1094.2 1843.0,1096.9 1849.6,1101.5 1862.8,1100.8 1869.4,1093.6 1877.3,1094.2 1885.2,1101.5 1887.9,1098.8 1891.8,1103.5 1898.4,1100.8 1902.4,1096.9 1912.9,1092.9 1919.5,1095.5 1927.5,1098.8 1934.1,1096.2 1940.7,1098.2 1947.3,1103.5 1955.2,1097.5 1960.5,1096.9 1964.4,1088.3 1972.3,1079.0 1981.6,1072.4 1986.9,1077.1 1994.8,1079.7 2001.4,1083.0 2006.6,1088.9 2014.6,1074.4 2021.2,1081.7 2025.1,1073.8 2033.0,1088.3 2039.6,1079.0 2043.6,1096.2 2047.6,1104.1 2054.2,1108.1 2060.8,1105.4 2066.0,1097.5 2072.6,1088.3 2077.9,1090.9 2085.8,1104.1 2090.0,1099.9 2090.0,1097.9 2094.6,1096.5 2108.5,1096.5 2112.2,1098.8 2117.7,1107.1 2127.0,1096.5 2129.7,1097.0 2134.3,1108.0 2139.9,1103.4 2143.6,1109.0 2147.3,1099.7 2151.0,1105.3 2154.7,1096.5 2162.1,1096.5 2169.5,1107.1 2173.1,1103.4 2175.9,1103.4 2182.4,1109.0 2185.2,1111.7 2188.9,1119.6 2199.0,1116.4 2208.3,1119.1 2212.9,1124.7 2219.3,1127.4 2247.1,1128.8 2251.7,1133.0 2256.3,1139.5 2270.2,1143.1 2275.7,1137.6 2284.0,1137.6" fill="none" stroke="#cf5b1f" stroke-width="4" stroke-linejoin="round" stroke-linecap="round"/>
<polyline points="76.9,841.7 78.3,871.3 82.9,874.1 86.6,887.9 94.0,898.1 105.1,894.4 108.8,887.0 113.4,887.9 119.9,896.2 125.4,897.2 134.7,885.2 139.3,883.3 145.8,881.0 151.3,878.7 155.0,870.4 162.4,881.5 167.0,878.7 170.7,882.4 178.1,896.2 184.6,887.9 188.3,885.2 194.3,872.2 198.4,883.3 203.0,885.2 208.6,883.3 219.7,888.9 227.1,888.9 231.7,887.9 239.1,889.8 245.5,882.4 253.9,864.8 258.5,866.7 264.0,882.4 268.0,909.0 268.0,925.6 269.1,935.2 275.6,1023.1 285.9,1072.2 302.7,1096.8 318.3,1104.5 326.0,1104.5 335.1,1112.3 344.1,1114.1 360.0,1114.1 360.0,1113.7 387.7,1114.1 399.6,1118.3 407.5,1115.0 414.1,1119.6 422.0,1122.2 439.2,1124.2 445.8,1126.9 465.6,1128.8 478.8,1128.8 482.1,1089.2 485.4,1128.8 531.6,1128.2 547.4,1128.8 555.3,1132.8 559.3,1140.7 565.9,1142.0 584.4,1140.7 592.3,1135.4 601.5,1136.1 604.2,1144.7 608.1,1135.4 617.4,1134.1 637.2,1135.4 640.5,1128.8 643.8,1135.4 650.0,1135.4 650.0,1134.5 701.7,1136.2 722.4,1133.6 743.1,1135.3 777.6,1134.5 784.5,1141.4 791.4,1152.6 801.7,1152.6 815.5,1148.3 839.7,1145.7 867.2,1145.7 881.0,1143.1 905.2,1140.5 925.9,1140.5 940.0,1143.3 940.0,1143.7 949.2,1143.0 953.2,1124.5 966.4,1127.2 974.3,1128.5 992.8,1128.5 1011.3,1129.8 1021.8,1133.1 1035.0,1132.4 1045.6,1131.8 1054.8,1131.1 1061.4,1133.1 1069.3,1133.1 1075.9,1131.1 1082.5,1133.1 1090.5,1133.1 1095.7,1131.1 1111.6,1131.1 1230.0,1131.1 1230.0,1130.5 1269.6,1130.5 1322.4,1131.1 1362.0,1132.4 1391.0,1133.1 1404.2,1139.7 1407.5,1146.3 1410.2,1154.2 1412.1,1125.2 1414.8,1121.9 1520.0,1121.9 1520.0,1121.1 1810.0,1121.1 1810.0,1121.9 1833.8,1121.9 1839.0,1124.6 1876.0,1123.2 1902.4,1123.2 1942.0,1123.9 1994.8,1122.6 2001.4,1108.1 2005.3,1106.8 2021.2,1106.8 2027.8,1114.7 2041.0,1116.6 2046.2,1155.6 2050.2,1139.7 2080.6,1139.7 2085.8,1147.7 2090.0,1138.3 2090.0,1147.8 2091.8,1136.2 2100.2,1136.2 2103.9,1155.2 2111.2,1136.2 2121.4,1137.6 2128.8,1155.2 2139.9,1155.2 2143.6,1139.5 2150.1,1148.7 2154.7,1133.9 2161.1,1133.0 2165.8,1139.5 2169.5,1155.2 2210.1,1156.1 2212.9,1152.4 2219.3,1099.7 2258.1,1099.7 2263.7,1153.3 2284.0,1153.3" fill="none" stroke="#b5402f" stroke-width="4" stroke-linejoin="round" stroke-linecap="round"/>
</g>
<text x="2256.00" y="821.50" font-family='"Liberation Sans", sans-serif' font-weight="400" font-size="21.80" fill="#666666" textLength="28.51" lengthAdjust="spacingAndGlyphs">4%</text>
<text x="2256.00" y="917.80" font-family='"Liberation Sans", sans-serif' font-weight="400" font-size="21.80" fill="#666666" textLength="28.51" lengthAdjust="spacingAndGlyphs">3%</text>
<text x="2256.00" y="1013.60" font-family='"Liberation Sans", sans-serif' font-weight="400" font-size="21.80" fill="#666666" textLength="28.51" lengthAdjust="spacingAndGlyphs">2%</text>
<text x="2256.00" y="1109.80" font-family='"Liberation Sans", sans-serif' font-weight="400" font-size="21.80" fill="#666666" textLength="28.51" lengthAdjust="spacingAndGlyphs">1%</text>
<text x="2256.00" y="1203.80" font-family='"Liberation Sans", sans-serif' font-weight="400" font-size="21.80" fill="#666666" textLength="28.51" lengthAdjust="spacingAndGlyphs">0%</text>
<rect x="76" y="1301.5" width="2208" height="2" fill="#c4c4c4"/>
<rect x="103" y="1303.5" width="2151" height="78.5" fill="rgb(102,133,194)" fill-opacity="0.3"/>
<rect x="132" y="1303.5" width="2" height="78.5" fill="#c9cfdd"/>
<rect x="497.5" y="1303.5" width="2" height="78.5" fill="#c9cfdd"/>
<rect x="864.4" y="1303.5" width="2" height="78.5" fill="#c9cfdd"/>
<rect x="1216.3" y="1303.5" width="2" height="78.5" fill="#c9cfdd"/>
<rect x="1568.3" y="1303.5" width="2" height="78.5" fill="#c9cfdd"/>
<rect x="1933.7" y="1303.5" width="2" height="78.5" fill="#c9cfdd"/>
<polyline points="104.5,1310.2 116.2,1316.2 133.8,1314.4 144.3,1323.2 156.6,1325.0 165.4,1321.4 179.5,1319.7 186.6,1316.2 197.1,1314.4 211.2,1312.6 216.5,1309.1 225.3,1310.9 239.4,1313.3 257.0,1316.2 281.6,1319.7 292.2,1323.2 301.0,1326.0 306.2,1347.8 309.8,1351.4 320.3,1353.1 325.6,1356.6 337.9,1354.9 343.2,1357.7 348.5,1354.9 362.5,1356.6 373.1,1356.6 383.7,1357.7 397.7,1356.6 401.3,1361.9 408.3,1360.2 417.1,1365.4 422.4,1365.4 429.4,1360.2 457.6,1359.1 506.9,1360.9 528.0,1360.2 563.2,1361.2 580.8,1363.7 784.9,1362.6 800.1,1367.2 800.8,1367.0 1039.4,1367.0 1190.0,1368.5 1388.9,1369.5 1403.8,1374.5 1408.7,1367.0 1428.6,1365.6 1552.9,1367.0 1567.8,1363.6 1587.7,1364.6 1637.4,1368.5 1657.3,1370.5 1836.3,1369.5 1935.7,1369.5 1985.4,1374.5 2119.7,1374.5 2129.6,1372.0 2253.9,1373.5" fill="none" stroke="#4aa597" stroke-width="2"/>
<text x="140.80" y="1373.50" font-family='"Liberation Sans", sans-serif' font-weight="400" font-size="23.98" fill="#8a8f9c" textLength="54.59" lengthAdjust="spacingAndGlyphs">2008</text>
<text x="505.50" y="1373.50" font-family='"Liberation Sans", sans-serif' font-weight="400" font-size="23.98" fill="#8a8f9c" textLength="54.59" lengthAdjust="spacingAndGlyphs">2010</text>
<text x="872.00" y="1373.50" font-family='"Liberation Sans", sans-serif' font-weight="400" font-size="23.98" fill="#8a8f9c" textLength="54.59" lengthAdjust="spacingAndGlyphs">2012</text>
<text x="1224.80" y="1373.50" font-family='"Liberation Sans", sans-serif' font-weight="400" font-size="23.98" fill="#8a8f9c" textLength="54.59" lengthAdjust="spacingAndGlyphs">2014</text>
<text x="1576.30" y="1373.50" font-family='"Liberation Sans", sans-serif' font-weight="400" font-size="23.98" fill="#8a8f9c" textLength="54.59" lengthAdjust="spacingAndGlyphs">2016</text>
<text x="1942.20" y="1373.50" font-family='"Liberation Sans", sans-serif' font-weight="400" font-size="23.98" fill="#8a8f9c" textLength="54.59" lengthAdjust="spacingAndGlyphs">2018</text>
<rect x="96" y="1327" width="14.5" height="29" fill="#f2f2f2" stroke="#999" stroke-width="2"/>
<rect x="101" y="1333" width="1.2" height="17" fill="#999"/>
<rect x="104.3" y="1333" width="1.2" height="17" fill="#999"/>
<rect x="2247.5" y="1327" width="14.5" height="29" fill="#f2f2f2" stroke="#999" stroke-width="2"/>
<rect x="2252.5" y="1333" width="1.2" height="17" fill="#999"/>
<rect x="2255.8" y="1333" width="1.2" height="17" fill="#999"/>
<rect x="75" y="1382" width="2209" height="29" fill="#cccccc"/>
<rect x="75" y="1382" width="28" height="29" fill="#e6e6e6" stroke="#cccccc" stroke-width="1.5"/>
<rect x="2255.5" y="1382" width="28" height="29" fill="#e6e6e6" stroke="#cccccc" stroke-width="1.5"/>
<path d="M85,1396.5 L91.5,1391.5 L91.5,1401.5 Z" fill="#333"/>
<path d="M2273.5,1396.5 L2267,1391.5 L2267,1401.5 Z" fill="#333"/>
<rect x="1173.8" y="1391" width="1.6" height="10" fill="#333"/>
<rect x="1177.8" y="1391" width="1.6" height="10" fill="#333"/>
<rect x="1181.8" y="1391" width="1.6" height="10" fill="#333"/>
<text x="2147.50" y="1429.70" font-family='"Liberation Sans", sans-serif' font-weight="400" font-size="18.75" fill="#999999" textLength="135.94" lengthAdjust="spacingAndGlyphs">Highcharts.com</text>
<rect x="56" y="1482" width="24" height="24" rx="4" fill="#77ab56"/><polyline points="61.5,1494.5 66,1500 74.5,1488.5" fill="none" stroke="#fff" stroke-width="2.6" stroke-linecap="round" stroke-linejoin="round"/>
<text x="87.00" y="1502.50" font-family='"Liberation Sans", sans-serif' font-weight="700" font-size="29.80" fill="#50b89c" stroke="#50b89c" stroke-width="0.9" textLength="53.43" lengthAdjust="spacingAndGlyphs">1 an</text>
<rect x="246" y="1482" width="24" height="24" rx="4" fill="#77ab56"/><polyline points="251.5,1494.5 256,1500 264.5,1488.5" fill="none" stroke="#fff" stroke-width="2.6" stroke-linecap="round" stroke-linejoin="round"/>
<text x="277.00" y="1502.50" font-family='"Liberation Sans", sans-serif' font-weight="700" font-size="29.80" fill="#e9c142" stroke="#e9c142" stroke-width="0.9" textLength="70.36" lengthAdjust="spacingAndGlyphs">2 ans</text>
<rect x="436" y="1482" width="24" height="24" rx="4" fill="#77ab56"/><polyline points="441.5,1494.5 446,1500 454.5,1488.5" fill="none" stroke="#fff" stroke-width="2.6" stroke-linecap="round" stroke-linejoin="round"/>
<text x="466.90" y="1502.50" font-family='"Liberation Sans", sans-serif' font-weight="700" font-size="29.80" fill="#4b96d7" stroke="#4b96d7" stroke-width="0.9" textLength="70.46" lengthAdjust="spacingAndGlyphs">3 ans</text>
<rect x="626" y="1482" width="24" height="24" rx="4" fill="#77ab56"/><polyline points="631.5,1494.5 636,1500 644.5,1488.5" fill="none" stroke="#fff" stroke-width="2.6" stroke-linecap="round" stroke-linejoin="round"/>
<text x="657.30" y="1502.50" font-family='"Liberation Sans", sans-serif' font-weight="700" font-size="29.80" fill="#9a5bb5" stroke="#9a5bb5" stroke-width="0.9" textLength="71.86" lengthAdjust="spacingAndGlyphs">4 ans</text>
<rect x="816" y="1482" width="24" height="24" rx="4" fill="#77ab56"/><polyline points="821.5,1494.5 826,1500 834.5,1488.5" fill="none" stroke="#fff" stroke-width="2.6" stroke-linecap="round" stroke-linejoin="round"/>
<text x="847.40" y="1502.50" font-family='"Liberation Sans", sans-serif' font-weight="700" font-size="29.80" fill="#34495e" stroke="#34495e" stroke-width="0.9" textLength="71.36" lengthAdjust="spacingAndGlyphs">5 ans</text>
<rect x="1006" y="1482" width="24" height="24" rx="4" fill="#77ab56"/><polyline points="1011.5,1494.5 1016,1500 1024.5,1488.5" fill="none" stroke="#fff" stroke-width="2.6" stroke-linecap="round" stroke-linejoin="round"/>
<text x="1037.50" y="1502.50" font-family='"Liberation Sans", sans-serif' font-weight="700" font-size="29.80" fill="#5ac57a" stroke="#5ac57a" stroke-width="0.9" textLength="71.36" lengthAdjust="spacingAndGlyphs">6 ans</text>
<rect x="1196" y="1482" width="24" height="24" rx="4" fill="#77ab56"/><polyline points="1201.5,1494.5 1206,1500 1214.5,1488.5" fill="none" stroke="#fff" stroke-width="2.6" stroke-linecap="round" stroke-linejoin="round"/>
<text x="1226.40" y="1502.50" font-family='"Liberation Sans", sans-serif' font-weight="700" font-size="29.80" fill="#e0833a" stroke="#e0833a" stroke-width="0.9" textLength="69.76" lengthAdjust="spacingAndGlyphs">7 ans</text>
<rect x="1386" y="1482" width="24" height="24" rx="4" fill="#77ab56"/><polyline points="1391.5,1494.5 1396,1500 1404.5,1488.5" fill="none" stroke="#fff" stroke-width="2.6" stroke-linecap="round" stroke-linejoin="round"/>
<text x="1417.30" y="1502.50" font-family='"Liberation Sans", sans-serif' font-weight="700" font-size="29.80" fill="#7f8c8d" stroke="#7f8c8d" stroke-width="0.9" textLength="71.76" lengthAdjust="spacingAndGlyphs">8 ans</text>
<rect x="1576" y="1482" width="24" height="24" rx="4" fill="#77ab56"/><polyline points="1581.5,1494.5 1586,1500 1594.5,1488.5" fill="none" stroke="#fff" stroke-width="2.6" stroke-linecap="round" stroke-linejoin="round"/>
<text x="1607.60" y="1502.50" font-family='"Liberation Sans", sans-serif' font-weight="700" font-size="29.80" fill="#3b80bf" stroke="#3b80bf" stroke-width="0.9" textLength="71.36" lengthAdjust="spacingAndGlyphs">9 ans</text>
<rect x="1766" y="1482" width="24" height="24" rx="4" fill="#77ab56"/><polyline points="1771.5,1494.5 1776,1500 1784.5,1488.5" fill="none" stroke="#fff" stroke-width="2.6" stroke-linecap="round" stroke-linejoin="round"/>
<text x="1796.40" y="1502.50" font-family='"Liberation Sans", sans-serif' font-weight="700" font-size="29.80" fill="#cf5b1f" stroke="#cf5b1f" stroke-width="0.9" textLength="86.75" lengthAdjust="spacingAndGlyphs">10 ans</text>
<rect x="1956" y="1482" width="24" height="24" rx="4" fill="#77ab56"/><polyline points="1961.5,1494.5 1966,1500 1974.5,1488.5" fill="none" stroke="#fff" stroke-width="2.6" stroke-linecap="round" stroke-linejoin="round"/>
<text x="1956.00" y="1543.70" font-family='"Liberation Sans", sans-serif' font-weight="700" font-size="30.09" fill="#b5402f" stroke="#b5402f" stroke-width="0.9" textLength="91.96" lengthAdjust="spacingAndGlyphs">Libor 3</text>
<text x="1956.00" y="1584.80" font-family='"Liberation Sans", sans-serif' font-weight="700" font-size="30.23" fill="#b5402f" stroke="#b5402f" stroke-width="0.9" textLength="64.47" lengthAdjust="spacingAndGlyphs">mois</text>
<rect x="2144" y="1480" width="28" height="28" rx="6" fill="#a9d39a"/><rect x="2146" y="1482" width="24" height="24" rx="4" fill="#77ab56"/><polyline points="2151.5,1494.5 2156,1500 2164.5,1488.5" fill="none" stroke="#fff" stroke-width="2.6" stroke-linecap="round" stroke-linejoin="round"/>
<text x="2145.60" y="1543.70" font-family='"Liberation Sans", sans-serif' font-weight="700" font-size="30.09" fill="#333333" stroke="#333333" stroke-width="0.9" textLength="109.83" lengthAdjust="spacingAndGlyphs">Tous les</text>
<text x="2145.60" y="1584.80" font-family='"Liberation Sans", sans-serif' font-weight="700" font-size="30.23" fill="#333333" stroke="#333333" stroke-width="0.9" textLength="59.04" lengthAdjust="spacingAndGlyphs">taux</text>
</svg></body></html>
